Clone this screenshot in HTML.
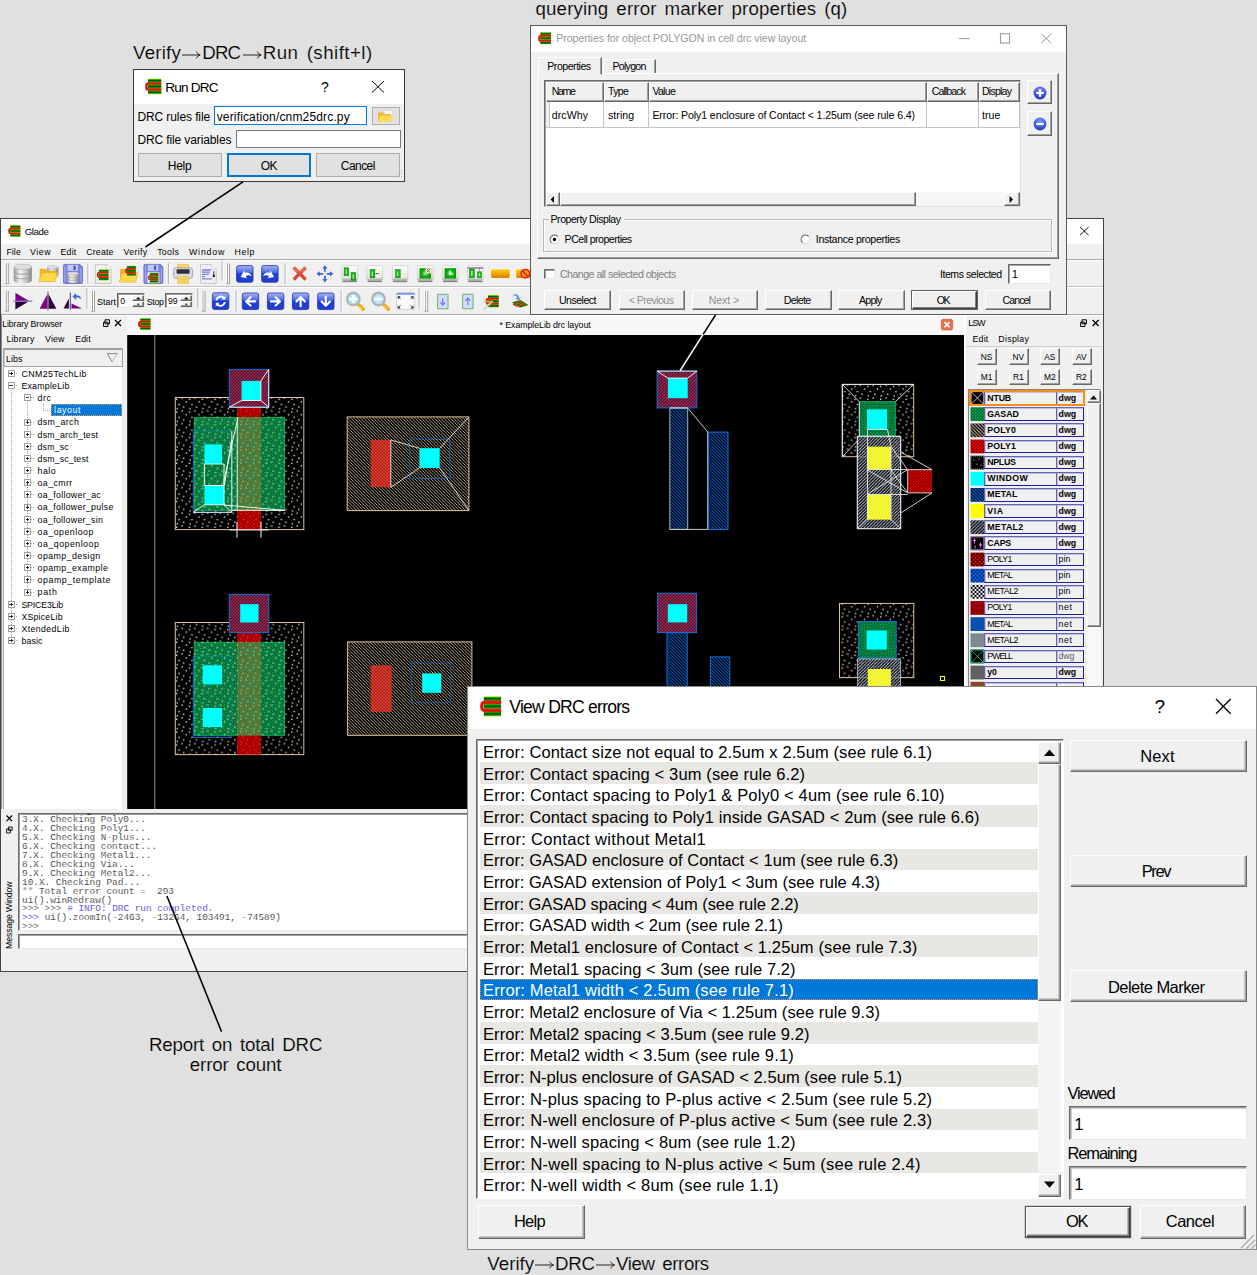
<!DOCTYPE html>
<html><head><meta charset="utf-8"><title>Glade DRC</title>
<style>
html,body{margin:0;padding:0}
body{width:1257px;height:1275px;background:#e0e0e0;position:relative;overflow:hidden;font-family:"Liberation Sans",sans-serif;font-size:8.8px;color:#000}
.t{position:absolute;white-space:nowrap;line-height:1;font-style:normal;font-weight:normal;color:#000;display:block}
.b{font-weight:bold}
.m{font-family:"Liberation Mono",monospace}
.x{position:absolute;box-sizing:border-box;display:block}
.w10{background:#e1e1e1;border:1px solid #adadad}
.rs{background:#f0f0f0;border:1px solid;border-color:#fff #696969 #696969 #fff;box-shadow:inset -1px -1px 0 #a0a0a0}
.sk{background:#fff;border:1px solid;border-color:#696969 #e8e8e8 #e8e8e8 #696969;box-shadow:inset 1px 1px 0 #a0a0a0}
svg{position:absolute;overflow:visible}
</style></head><body>
<svg width="0" height="0" style="left:0;top:0"><defs>
<symbol id="gl" viewBox="0 0 17 16">
<rect x="3" y="0.2" width="13.2" height="15.6" fill="#b8ec00"/>
<rect x="3" y="0.8" width="13.2" height="2.9" fill="#0c940c"/><rect x="3" y="6.3" width="13.2" height="3.4" fill="#0c940c"/><rect x="3" y="12.3" width="13.2" height="2.9" fill="#0c940c"/>
<rect x="3" y="1.5" width="13.2" height="1.3" fill="#065c06"/><rect x="3" y="7.3" width="13.2" height="1.4" fill="#065c06"/><rect x="3" y="13.1" width="13.2" height="1.3" fill="#065c06"/>
<path d="M16.4 4.9H3.4a2 2 0 0 0-2 2v2.2a2 2 0 0 0 2 2H16.4" fill="none" stroke="#dc1808" stroke-width="2.5"/>
</symbol>
</defs></svg>
<div class="x" style="left:0;top:218px;width:1104px;height:754px;background:#f0f0f0;border:1px solid #444"></div>
<div class="x" style="left:1px;top:219px;width:1102px;height:25px;background:#fff"></div>
<svg style="left:7.5px;top:225px" width="13" height="12"><use href="#gl"/></svg>
<i class="t" style="letter-spacing:-0.396px;left:24.7px;top:227.2px;font-size:9.7px">Glade</i>
<svg style="left:1079.5px;top:226.7px" width="9" height="9"><path d="M0 0L8.7 8.2M8.7 0L0 8.2" stroke="#000" stroke-width=".9" fill="none"/></svg>
<i class="t" style="letter-spacing:0.073px;left:6.4px;top:247.7px;font-size:8.8px">File</i>
<i class="t" style="letter-spacing:0.528px;left:30.0px;top:247.7px;font-size:8.8px">View</i>
<i class="t" style="letter-spacing:0.145px;left:60.6px;top:247.7px;font-size:8.8px">Edit</i>
<i class="t" style="letter-spacing:0.137px;left:86.3px;top:247.7px;font-size:8.8px">Create</i>
<i class="t" style="letter-spacing:0.318px;left:123.5px;top:247.7px;font-size:8.8px">Verify</i>
<i class="t" style="letter-spacing:0.289px;left:157.2px;top:247.7px;font-size:8.8px">Tools</i>
<i class="t" style="letter-spacing:0.820px;left:189.0px;top:247.7px;font-size:8.8px">Window</i>
<i class="t" style="letter-spacing:0.634px;left:234.5px;top:247.7px;font-size:8.8px">Help</i>
<div class="x" style="left:1px;top:259.0px;width:1102px;height:1px;background:#a8a8a8"></div>
<div class="x" style="left:1px;top:260.0px;width:1102px;height:1px;background:#fff"></div>
<div class="x" style="left:1px;top:286.0px;width:1102px;height:1px;background:#c4c4c4"></div>
<div class="x" style="left:1px;top:287.0px;width:1102px;height:1px;background:#fff"></div>
<div class="x" style="left:1px;top:313.5px;width:1102px;height:1px;background:#a8a8a8"></div>
<div class="x" style="left:1px;top:314.5px;width:1102px;height:1px;background:#fff"></div>
<div class="x" style="left:1px;top:315px;width:.8px;height:495px;background:#8a8a8a"></div>
<i class="t" style="letter-spacing:-0.116px;left:2.2px;top:319.6px;font-size:8.8px">Library Browser</i>
<svg style="left:102.5px;top:318.5px" width="20" height="9" viewBox="0 0 20 9"><path d="M2 .8h4.5v4H2zM.6 3.2h4.3v4.3H.6z" fill="#f0f0f0" stroke="#000" stroke-width="1"/><path d="M12 1l6 6M18 1l-6 6" stroke="#000" stroke-width="1.3"/></svg>
<i class="t" style="letter-spacing:0.183px;left:6.4px;top:334.8px;font-size:8.8px">Library</i>
<i class="t" style="letter-spacing:0.128px;left:45.1px;top:334.8px;font-size:8.8px">View</i>
<i class="t" style="letter-spacing:0.079px;left:75.2px;top:334.8px;font-size:8.8px">Edit</i>
<div class="x" style="left:2.5px;top:347.5px;width:120px;height:462px;background:#fff;border:1px solid #a0a0a0;border-right-color:#e8e8e8;border-bottom:none"></div>
<div class="x" style="left:3.5px;top:348.5px;width:119px;height:18.5px;background:#f0f0f0;border:1.5px solid #a0a0a0;border-top-color:#9a9a9a;border-left-color:#c8c8c8"></div>
<i class="t" style="letter-spacing:0.119px;left:6px;top:354.7px;font-size:8.8px">Libs</i>
<svg style="left:107px;top:353.4px" width="11" height="10"><path d="M.3 .6H10.3L5.2 9z" fill="none" stroke="#b4b4b4" stroke-width=".9"/><path d="M10.3 .6H.3L5.2 9" fill="none" stroke="#8c8c8c" stroke-width=".9"/></svg>
<i class="t" style="letter-spacing:0.449px;left:21.4px;top:369.9px;font-size:8.8px">CNM25TechLib</i>
<i class="t" style="letter-spacing:0.224px;left:21.4px;top:382.0px;font-size:8.8px">ExampleLib</i>
<i class="t" style="letter-spacing:0.487px;left:37.6px;top:394.1px;font-size:8.8px">drc</i>
<div class="x" style="left:51.3px;top:404.0px;width:71px;height:11.7px;background:#0078d7;border:1px dotted #e89858"></div>
<i class="t" style="letter-spacing:0.583px;left:54.1px;top:406.3px;font-size:8.8px;color:#fff">layout</i>
<i class="t" style="letter-spacing:0.366px;left:37.6px;top:418.4px;font-size:8.8px">dsm_arch</i>
<i class="t" style="letter-spacing:0.224px;left:37.6px;top:430.6px;font-size:8.8px">dsm_arch_test</i>
<i class="t" style="letter-spacing:0.136px;left:37.6px;top:442.7px;font-size:8.8px">dsm_sc</i>
<i class="t" style="letter-spacing:0.140px;left:37.6px;top:454.8px;font-size:8.8px">dsm_sc_test</i>
<i class="t" style="letter-spacing:0.487px;left:37.6px;top:467.0px;font-size:8.8px">halo</i>
<i class="t" style="letter-spacing:0.387px;left:37.6px;top:479.1px;font-size:8.8px">oa_cmrr</i>
<i class="t" style="letter-spacing:0.308px;left:37.6px;top:491.3px;font-size:8.8px">oa_follower_ac</i>
<i class="t" style="letter-spacing:0.304px;left:37.6px;top:503.4px;font-size:8.8px">oa_follower_pulse</i>
<i class="t" style="letter-spacing:0.296px;left:37.6px;top:515.5px;font-size:8.8px">oa_follower_sin</i>
<i class="t" style="letter-spacing:0.480px;left:37.6px;top:527.7px;font-size:8.8px">oa_openloop</i>
<i class="t" style="letter-spacing:0.492px;left:37.6px;top:539.8px;font-size:8.8px">oa_qopenloop</i>
<i class="t" style="letter-spacing:0.442px;left:37.6px;top:552.0px;font-size:8.8px">opamp_design</i>
<i class="t" style="letter-spacing:0.436px;left:37.6px;top:564.1px;font-size:8.8px">opamp_example</i>
<i class="t" style="letter-spacing:0.557px;left:37.6px;top:576.2px;font-size:8.8px">opamp_template</i>
<i class="t" style="letter-spacing:0.691px;left:37.6px;top:588.4px;font-size:8.8px">path</i>
<i class="t" style="letter-spacing:-0.168px;left:21.4px;top:600.5px;font-size:8.8px">SPICE3Lib</i>
<i class="t" style="letter-spacing:0.197px;left:21.4px;top:612.6px;font-size:8.8px">XSpiceLib</i>
<i class="t" style="letter-spacing:0.386px;left:21.4px;top:624.8px;font-size:8.8px">XtendedLib</i>
<i class="t" style="letter-spacing:0.139px;left:21.4px;top:636.9px;font-size:8.8px">basic</i>
<svg style="left:0;top:0" width="130" height="700" shape-rendering="crispEdges"><path d="M11 388.4V640.4" stroke="#a8a8a8" stroke-width="1" stroke-dasharray="1 1"/><path d="M27.5 400.6V591.8" stroke="#a8a8a8" stroke-width="1" stroke-dasharray="1 1"/><path d="M14.0 373.5H18.4" stroke="#a8a8a8" stroke-dasharray="1 1"/><rect x="8.0" y="370.5" width="6" height="6" fill="#fff" stroke="#8a8a8a" stroke-width=".8"/><path d="M9.3 373.5h3.4" stroke="#000" stroke-width=".8"/><path d="M11.0 371.8v3.4" stroke="#000" stroke-width=".8"/><path d="M14.0 385.6H18.4" stroke="#a8a8a8" stroke-dasharray="1 1"/><rect x="8.0" y="382.6" width="6" height="6" fill="#fff" stroke="#8a8a8a" stroke-width=".8"/><path d="M9.3 385.6h3.4" stroke="#000" stroke-width=".8"/><path d="M30.5 397.8H34.6" stroke="#a8a8a8" stroke-dasharray="1 1"/><rect x="24.5" y="394.8" width="6" height="6" fill="#fff" stroke="#8a8a8a" stroke-width=".8"/><path d="M25.8 397.8h3.4" stroke="#000" stroke-width=".8"/><path d="M43 403.9V410.4H51" stroke="#a8a8a8" fill="none" stroke-dasharray="1 1"/><path d="M30.5 422.1H34.6" stroke="#a8a8a8" stroke-dasharray="1 1"/><rect x="24.5" y="419.1" width="6" height="6" fill="#fff" stroke="#8a8a8a" stroke-width=".8"/><path d="M25.8 422.1h3.4" stroke="#000" stroke-width=".8"/><path d="M27.5 420.4v3.4" stroke="#000" stroke-width=".8"/><path d="M30.5 434.2H34.6" stroke="#a8a8a8" stroke-dasharray="1 1"/><rect x="24.5" y="431.2" width="6" height="6" fill="#fff" stroke="#8a8a8a" stroke-width=".8"/><path d="M25.8 434.2h3.4" stroke="#000" stroke-width=".8"/><path d="M27.5 432.5v3.4" stroke="#000" stroke-width=".8"/><path d="M30.5 446.3H34.6" stroke="#a8a8a8" stroke-dasharray="1 1"/><rect x="24.5" y="443.3" width="6" height="6" fill="#fff" stroke="#8a8a8a" stroke-width=".8"/><path d="M25.8 446.3h3.4" stroke="#000" stroke-width=".8"/><path d="M27.5 444.6v3.4" stroke="#000" stroke-width=".8"/><path d="M30.5 458.5H34.6" stroke="#a8a8a8" stroke-dasharray="1 1"/><rect x="24.5" y="455.5" width="6" height="6" fill="#fff" stroke="#8a8a8a" stroke-width=".8"/><path d="M25.8 458.5h3.4" stroke="#000" stroke-width=".8"/><path d="M27.5 456.8v3.4" stroke="#000" stroke-width=".8"/><path d="M30.5 470.6H34.6" stroke="#a8a8a8" stroke-dasharray="1 1"/><rect x="24.5" y="467.6" width="6" height="6" fill="#fff" stroke="#8a8a8a" stroke-width=".8"/><path d="M25.8 470.6h3.4" stroke="#000" stroke-width=".8"/><path d="M27.5 468.9v3.4" stroke="#000" stroke-width=".8"/><path d="M30.5 482.8H34.6" stroke="#a8a8a8" stroke-dasharray="1 1"/><rect x="24.5" y="479.8" width="6" height="6" fill="#fff" stroke="#8a8a8a" stroke-width=".8"/><path d="M25.8 482.8h3.4" stroke="#000" stroke-width=".8"/><path d="M27.5 481.1v3.4" stroke="#000" stroke-width=".8"/><path d="M30.5 494.9H34.6" stroke="#a8a8a8" stroke-dasharray="1 1"/><rect x="24.5" y="491.9" width="6" height="6" fill="#fff" stroke="#8a8a8a" stroke-width=".8"/><path d="M25.8 494.9h3.4" stroke="#000" stroke-width=".8"/><path d="M27.5 493.2v3.4" stroke="#000" stroke-width=".8"/><path d="M30.5 507.0H34.6" stroke="#a8a8a8" stroke-dasharray="1 1"/><rect x="24.5" y="504.0" width="6" height="6" fill="#fff" stroke="#8a8a8a" stroke-width=".8"/><path d="M25.8 507.0h3.4" stroke="#000" stroke-width=".8"/><path d="M27.5 505.3v3.4" stroke="#000" stroke-width=".8"/><path d="M30.5 519.2H34.6" stroke="#a8a8a8" stroke-dasharray="1 1"/><rect x="24.5" y="516.2" width="6" height="6" fill="#fff" stroke="#8a8a8a" stroke-width=".8"/><path d="M25.8 519.2h3.4" stroke="#000" stroke-width=".8"/><path d="M27.5 517.5v3.4" stroke="#000" stroke-width=".8"/><path d="M30.5 531.3H34.6" stroke="#a8a8a8" stroke-dasharray="1 1"/><rect x="24.5" y="528.3" width="6" height="6" fill="#fff" stroke="#8a8a8a" stroke-width=".8"/><path d="M25.8 531.3h3.4" stroke="#000" stroke-width=".8"/><path d="M27.5 529.6v3.4" stroke="#000" stroke-width=".8"/><path d="M30.5 543.5H34.6" stroke="#a8a8a8" stroke-dasharray="1 1"/><rect x="24.5" y="540.5" width="6" height="6" fill="#fff" stroke="#8a8a8a" stroke-width=".8"/><path d="M25.8 543.5h3.4" stroke="#000" stroke-width=".8"/><path d="M27.5 541.8v3.4" stroke="#000" stroke-width=".8"/><path d="M30.5 555.6H34.6" stroke="#a8a8a8" stroke-dasharray="1 1"/><rect x="24.5" y="552.6" width="6" height="6" fill="#fff" stroke="#8a8a8a" stroke-width=".8"/><path d="M25.8 555.6h3.4" stroke="#000" stroke-width=".8"/><path d="M27.5 553.9v3.4" stroke="#000" stroke-width=".8"/><path d="M30.5 567.7H34.6" stroke="#a8a8a8" stroke-dasharray="1 1"/><rect x="24.5" y="564.7" width="6" height="6" fill="#fff" stroke="#8a8a8a" stroke-width=".8"/><path d="M25.8 567.7h3.4" stroke="#000" stroke-width=".8"/><path d="M27.5 566.0v3.4" stroke="#000" stroke-width=".8"/><path d="M30.5 579.9H34.6" stroke="#a8a8a8" stroke-dasharray="1 1"/><rect x="24.5" y="576.9" width="6" height="6" fill="#fff" stroke="#8a8a8a" stroke-width=".8"/><path d="M25.8 579.9h3.4" stroke="#000" stroke-width=".8"/><path d="M27.5 578.2v3.4" stroke="#000" stroke-width=".8"/><path d="M30.5 592.0H34.6" stroke="#a8a8a8" stroke-dasharray="1 1"/><rect x="24.5" y="589.0" width="6" height="6" fill="#fff" stroke="#8a8a8a" stroke-width=".8"/><path d="M25.8 592.0h3.4" stroke="#000" stroke-width=".8"/><path d="M27.5 590.3v3.4" stroke="#000" stroke-width=".8"/><path d="M14.0 604.2H18.4" stroke="#a8a8a8" stroke-dasharray="1 1"/><rect x="8.0" y="601.2" width="6" height="6" fill="#fff" stroke="#8a8a8a" stroke-width=".8"/><path d="M9.3 604.2h3.4" stroke="#000" stroke-width=".8"/><path d="M11.0 602.5v3.4" stroke="#000" stroke-width=".8"/><path d="M14.0 616.3H18.4" stroke="#a8a8a8" stroke-dasharray="1 1"/><rect x="8.0" y="613.3" width="6" height="6" fill="#fff" stroke="#8a8a8a" stroke-width=".8"/><path d="M9.3 616.3h3.4" stroke="#000" stroke-width=".8"/><path d="M11.0 614.6v3.4" stroke="#000" stroke-width=".8"/><path d="M14.0 628.4H18.4" stroke="#a8a8a8" stroke-dasharray="1 1"/><rect x="8.0" y="625.4" width="6" height="6" fill="#fff" stroke="#8a8a8a" stroke-width=".8"/><path d="M9.3 628.4h3.4" stroke="#000" stroke-width=".8"/><path d="M11.0 626.7v3.4" stroke="#000" stroke-width=".8"/><path d="M14.0 640.6H18.4" stroke="#a8a8a8" stroke-dasharray="1 1"/><rect x="8.0" y="637.6" width="6" height="6" fill="#fff" stroke="#8a8a8a" stroke-width=".8"/><path d="M9.3 640.6h3.4" stroke="#000" stroke-width=".8"/><path d="M11.0 638.9v3.4" stroke="#000" stroke-width=".8"/></svg>
<svg style="left:0;top:0" width="1257" height="1275">
<defs>
<clipPath id="cv"><rect x="127.2" y="334.3" width="836.8" height="474.7"/></clipPath>
<pattern id="pNT" width="12.8" height="12.8" patternUnits="userSpaceOnUse" x="175" y="397"><g fill="#fff4dc"><rect x="1" y="1.6" width="1.3" height="1.3"/><rect x="6.4" y="0.4" width="1.3" height="1.3"/><rect x="10.6" y="4.2" width="1.3" height="1.3"/><rect x="3.4" y="6.8" width="1.3" height="1.3"/><rect x="8" y="9.4" width="1.3" height="1.3"/><rect x="1.6" y="11" width="1.3" height="1.3"/></g></pattern>
<pattern id="pGD" width="3.2" height="3.2" patternUnits="userSpaceOnUse"><rect width="3.2" height="3.2" fill="#066a34"/><rect x="0" y="0" width="1.05" height="1.05" fill="#00b860"/><rect x="1.6" y="1.6" width="1.05" height="1.05" fill="#00b860"/></pattern>
<pattern id="pP0" width="3.2" height="3.2" patternUnits="userSpaceOnUse"><rect width="3.2" height="3.2" fill="#000"/><path d="M-1 -1L4.2 4.2M-1 2.2L1 4.2M2.2 -1L4.2 1" stroke="#e0c8a4" stroke-width=".78"/></pattern>
<pattern id="pP1" width="3.2" height="3.2" patternUnits="userSpaceOnUse"><path d="M-1 4.2L4.2 -1M-1 1L1 -1M2.2 4.2L4.2 2.2" stroke="#ff0000" stroke-width="1.5"/></pattern>
<pattern id="pPG" width="3.2" height="3.2" patternUnits="userSpaceOnUse"><path d="M-1 4.2L4.2 -1M-1 1L1 -1M2.2 4.2L4.2 2.2" stroke="#a89040" stroke-width="1.1"/><rect x="0" y="0" width="1" height="1" fill="#ff2010"/></pattern>
<pattern id="pME" width="3.2" height="3.2" patternUnits="userSpaceOnUse"><path d="M-1 -1L4.2 4.2M-1 2.2L1 4.2M2.2 -1L4.2 1" stroke="#0868e0" stroke-width=".85"/></pattern>
<pattern id="pM2" width="3.2" height="3.2" patternUnits="userSpaceOnUse"><path d="M-1 4.2L4.2 -1M-1 1L1 -1M2.2 4.2L4.2 2.2" stroke="#c8d4e4" stroke-width=".9"/></pattern>
<pattern id="pPN" width="3.2" height="3.2" patternUnits="userSpaceOnUse"><rect width="3.2" height="3.2" fill="#000"/><path d="M-1 4.2L4.2 -1M-1 1L1 -1M2.2 4.2L4.2 2.2" stroke="#ff0000" stroke-width="1.45"/><path d="M-1 -1L4.2 4.2M-1 2.2L1 4.2M2.2 -1L4.2 1" stroke="#1068e0" stroke-width=".9" opacity=".75"/></pattern>
<pattern id="pRD" width="3.2" height="3.2" patternUnits="userSpaceOnUse"><rect width="3.2" height="3.2" fill="#402418"/><path d="M-1 4.2L4.2 -1M-1 1L1 -1M2.2 4.2L4.2 2.2" stroke="#ff2018" stroke-width="1.2"/><path d="M-1 -1L4.2 4.2M-1 2.2L1 4.2M2.2 -1L4.2 1" stroke="#ff4838" stroke-width=".85"/></pattern>
</defs>
<rect x="127.2" y="334.3" width="836.8" height="474.7" fill="#000"/>
<g clip-path="url(#cv)">
<path d="M154.8 334V809" stroke="#909090" stroke-width="1"/>
<rect x="175.3" y="397.5" width="128.5" height="132.1" fill="url(#pNT)" stroke="#dcc4a0" stroke-width="1"/>
<rect x="194.2" y="417.3" width="90.5" height="93" fill="url(#pGD)" stroke="#10c060" stroke-width=".8"/>
<rect x="194.2" y="417.3" width="90.5" height="93" fill="url(#pNT)" opacity=".8"/>
<rect x="237" y="407.2" width="24" height="10.1" fill="url(#pP1)"/>
<rect x="237" y="510.3" width="24" height="19.3" fill="url(#pP1)"/>
<rect x="237" y="407.2" width="24" height="10.1" fill="#c00000" opacity=".4"/>
<rect x="237" y="510.3" width="24" height="19.3" fill="#c00000" opacity=".4"/>
<rect x="237" y="417.3" width="24" height="93" fill="url(#pPG)" opacity=".7"/>
<path d="M193.3 431.1V512.3H231.8" fill="none" stroke="#1070e0" stroke-width="1"/>
<path d="M193.3 431.1H231.8V512.3" fill="none" stroke="#1088c0" stroke-width="1" stroke-dasharray="2 1" opacity=".8"/>
<rect x="204.4" y="444.4" width="17.6" height="19.6" fill="#00ffff"/><rect x="204.4" y="485.5" width="19.6" height="19.3" fill="#00ffff"/>
<rect x="229.3" y="369.4" width="39.5" height="38" fill="url(#pPN)" stroke="#1070e0" stroke-width="1"/>
<rect x="241.6" y="380.9" width="19.3" height="19.6" fill="#00ffff"/>
<rect x="175.3" y="622.5" width="128.5" height="132.1" fill="url(#pNT)" stroke="#dcc4a0" stroke-width="1"/>
<rect x="194.2" y="642.3" width="90.5" height="93" fill="url(#pGD)" stroke="#10c060" stroke-width=".8"/>
<rect x="194.2" y="642.3" width="90.5" height="93" fill="url(#pNT)" opacity=".8"/>
<rect x="237" y="632.2" width="24" height="10.1" fill="url(#pP1)"/>
<rect x="237" y="735.3" width="24" height="19.3" fill="url(#pP1)"/>
<rect x="237" y="632.2" width="24" height="10.1" fill="#c00000" opacity=".4"/>
<rect x="237" y="735.3" width="24" height="19.3" fill="#c00000" opacity=".4"/>
<rect x="237" y="642.3" width="24" height="93" fill="url(#pPG)" opacity=".7"/>
<path d="M193.3 656.1V737.3H231.8" fill="none" stroke="#1070e0" stroke-width="1"/>
<path d="M193.3 656.1H231.8V737.3" fill="none" stroke="#1088c0" stroke-width="1" stroke-dasharray="2 1" opacity=".8"/>
<rect x="202.8" y="665.3" width="19.3" height="19.1" fill="#00ffff"/><rect x="202.8" y="708" width="19.3" height="19.1" fill="#00ffff"/>
<rect x="229.3" y="594.4" width="39.5" height="38" fill="url(#pPN)" stroke="#1070e0" stroke-width="1"/>
<rect x="240.2" y="604.2" width="18.3" height="18.3" fill="#00ffff"/>
<g stroke="#fff" stroke-width="1" fill="none">
<path d="M268.7 369.4V407.2H229.3M268.7 369.4L260.9 380.9M229.3 407.2L241.6 400.5H260.9L268.7 407.2M260.9 380.9V400.5" opacity=".9"/>
<path d="M231.8 431V512.3H193.3L204.4 504.8H224L231.8 512.3M237.2 417.3V510.3M238 417.5L224 480V505L284.7 510.3H231.8M231.5 440L224.5 485M204.4 464H224V485.5H204.4Z" opacity=".9"/>
<path d="M229.3 529.9H268.7M237 522V537.7M261 522V537.7"/>
</g>
<rect x="347.2" y="416.9" width="121.7" height="93.7" fill="url(#pP0)" stroke="#dcc4a0" stroke-width="1"/>
<rect x="370.8" y="439.8" width="20" height="47.5" fill="url(#pRD)"/>
<rect x="409.9" y="439.2" width="39.9" height="39.2" fill="none" stroke="#1070e0" stroke-width="1" stroke-dasharray="2 1"/>
<rect x="419.4" y="448.2" width="20.3" height="19.8" fill="#00ffff"/>
<path d="M390.8 440L419.4 448.2M390.8 487.3L419.4 468M439.7 448.2L468.5 417.5M439.7 468L468.5 510M390.8 440V487.3" stroke="#f0f0f0" stroke-width="1" fill="none" opacity=".85"/>
<rect x="347.6" y="641.9" width="124.3" height="93.4" fill="url(#pP0)" stroke="#dcc4a0" stroke-width="1"/>
<rect x="370.8" y="665.3" width="20.9" height="46.6" fill="url(#pRD)"/>
<rect x="411.3" y="663.2" width="39.7" height="39.5" fill="none" stroke="#1070e0" stroke-width=".9" stroke-dasharray="1.6 .8"/>
<rect x="422.2" y="673.4" width="19.1" height="19.4" fill="#00ffff"/>
<rect x="669.8" y="408" width="17.9" height="121.4" fill="url(#pME)" stroke="#b0b0b0" stroke-width="1"/>
<rect x="707.8" y="432.1" width="20.2" height="97.3" fill="url(#pME)" stroke="#1070e0" stroke-width="1"/>
<path d="M687.7 408L707.8 432.1V529.4H669.8" stroke="#c8c8c8" stroke-width="1" fill="none"/>
<rect x="657.1" y="371.1" width="39.8" height="36.8" fill="url(#pPN)" stroke="#1070e0" stroke-width="1"/>
<rect x="667.9" y="378.1" width="19.8" height="20.1" fill="#00ffff"/>
<path d="M657.1 371.1H696.9M657.1 371.1L667.9 378.1H687.7L696.9 371.1M669.8 407.9H687.7" stroke="#fff" stroke-width="1" fill="none" opacity=".9"/>
<rect x="667" y="632.6" width="20.2" height="80" fill="url(#pME)" stroke="#1070e0" stroke-width="1"/>
<rect x="710.4" y="656.9" width="19.4" height="60" fill="url(#pME)" stroke="#1070e0" stroke-width="1"/>
<rect x="657.6" y="593.2" width="39" height="39.4" fill="url(#pPN)" stroke="#1070e0" stroke-width="1"/>
<rect x="667.8" y="604.2" width="19.4" height="18.2" fill="#00ffff"/>
<rect x="842.3" y="384.4" width="71.4" height="72.3" fill="url(#pNT)" stroke="#dcc4a0" stroke-width="1"/>
<rect x="859.3" y="401.7" width="36" height="34.3" fill="url(#pGD)" stroke="#10c060" stroke-width=".8"/>
<rect x="866.9" y="409.3" width="20.1" height="20" fill="#00ffff"/>
<rect x="857.3" y="436.3" width="43.4" height="92.4" fill="#000" opacity=".6"/>
<rect x="857.3" y="436.3" width="43.4" height="92.4" fill="url(#pM2)" stroke="#c8d8f0" stroke-width=".9" stroke-opacity=".8"/>
<rect x="867" y="446.7" width="24" height="22.6" fill="#ffff00"/><rect x="867" y="494.7" width="24" height="24.9" fill="#ffff00"/>
<rect x="867" y="446.7" width="24" height="22.6" fill="url(#pM2)" opacity=".6"/><rect x="867" y="494.7" width="24" height="24.9" fill="url(#pM2)" opacity=".6"/>
<rect x="907.7" y="469.7" width="24.3" height="23.2" fill="url(#pP1)"/><rect x="907.7" y="469.7" width="24.3" height="23.2" fill="#c00000" opacity=".4"/>
<g stroke="#f0f0f0" stroke-width="1" fill="none" opacity=".85">
<path d="M842.3 384.4H913.7M842.3 384.4V456.7M842.3 384.4L859.3 401.7M913.7 384.4L895.3 401.7M842.3 456.7L857.3 441M859.3 401.7V436M867.5 429.5H887.5L891 446.7M867.5 429.5V520M891 446.7V520"/>
<path d="M900.7 452L932 469.7H907.7V492.9H932L900.7 513M867 469.5H907.7M867 494.5H907.7M867.5 470L907.7 492.9M867.5 494L907.7 469.7M891 446.7L907.7 469.7M891 470L907.7 492.9M857.3 528.7L867 519.6M900.7 528.7L891 519.6M857.3 436.3H900.7V528.7H857.3Z"/>
</g>
<rect x="839.5" y="603.4" width="74.3" height="74.2" fill="url(#pNT)" stroke="#dcc4a0" stroke-width="1"/>
<rect x="858.4" y="621.6" width="37.8" height="36.5" fill="url(#pGD)" stroke="#1070e0" stroke-width="1"/>
<rect x="866.6" y="630.5" width="20.2" height="19.1" fill="#00ffff"/>
<rect x="857.6" y="658.9" width="43" height="60" fill="#000" opacity=".6"/>
<rect x="857.6" y="658.9" width="43" height="60" fill="url(#pM2)" stroke="#c8d8f0" stroke-width=".9" stroke-opacity=".8"/>
<rect x="867.8" y="669" width="23.1" height="30" fill="#ffff00"/><rect x="867.8" y="669" width="23.1" height="30" fill="url(#pM2)" opacity=".6"/>
<rect x="940.5" y="676.5" width="4" height="4" fill="none" stroke="#ffff00" stroke-width="1"/>
</g></svg>
<div class="x" style="left:964px;top:315px;width:1.5px;height:495px;background:#fff"></div>
<i class="t" style="letter-spacing:-0.885px;left:968.2px;top:319.3px;font-size:8.8px">LSW</i>
<svg style="left:1080.4px;top:318.7px" width="20" height="9" viewBox="0 0 20 9"><path d="M2 .8h4.5v4H2zM.6 3.2h4.3v4.3H.6z" fill="#f0f0f0" stroke="#000" stroke-width="1"/><path d="M12.6 1l6 6M18.6 1l-6 6" stroke="#000" stroke-width="1.3"/></svg>
<i class="t" style="letter-spacing:0.212px;left:972.5px;top:335.3px;font-size:8.8px">Edit</i>
<i class="t" style="letter-spacing:0.291px;left:998.3px;top:335.3px;font-size:8.8px">Display</i>
<div class="x" style="left:966px;top:346.3px;width:136px;height:1px;background:#d0d0d0"></div>
<div class="x rs" style="left:977.3px;top:348.2px;width:19.5px;height:16.8px"></div>
<i class="t" style="left:977.3px;top:352.8px;width:18.5px;text-align:center;font-size:8.4px">NS</i>
<div class="x rs" style="left:1009.0px;top:348.2px;width:19.6px;height:16.8px"></div>
<i class="t" style="left:1009.0px;top:352.8px;width:18.6px;text-align:center;font-size:8.4px">NV</i>
<div class="x rs" style="left:1040.3px;top:348.2px;width:20.0px;height:16.8px"></div>
<i class="t" style="left:1040.3px;top:352.8px;width:19.0px;text-align:center;font-size:8.4px">AS</i>
<div class="x rs" style="left:1072.0px;top:348.2px;width:19.8px;height:16.8px"></div>
<i class="t" style="left:1072.0px;top:352.8px;width:18.8px;text-align:center;font-size:8.4px">AV</i>
<div class="x rs" style="left:977.3px;top:368.5px;width:19.5px;height:16.5px"></div>
<i class="t" style="left:977.3px;top:372.8px;width:18.5px;text-align:center;font-size:8.4px">M1</i>
<div class="x rs" style="left:1009.0px;top:368.5px;width:19.6px;height:16.5px"></div>
<i class="t" style="left:1009.0px;top:372.8px;width:18.6px;text-align:center;font-size:8.4px">R1</i>
<div class="x rs" style="left:1040.3px;top:368.5px;width:20.0px;height:16.5px"></div>
<i class="t" style="left:1040.3px;top:372.8px;width:19.0px;text-align:center;font-size:8.4px">M2</i>
<div class="x rs" style="left:1072.0px;top:368.5px;width:19.8px;height:16.5px"></div>
<i class="t" style="left:1072.0px;top:372.8px;width:18.8px;text-align:center;font-size:8.4px">R2</i>
<div class="x" style="left:968px;top:388.5px;width:133px;height:300px;background:#f0f0f0;border:1px solid;border-color:#828282 #fff #fff #828282"></div>
<svg style="left:0;top:0" width="1257" height="700"><defs>
<pattern id="s3" width="3.4" height="3.4" patternUnits="userSpaceOnUse"><rect width="3.4" height="3.4" fill="#000"/><path d="M-1 -1L4.4 4.4M-1 2.4L1 4.4M2.4 -1L4.4 1" stroke="#e0c8a4" stroke-width="1"/></pattern>
<pattern id="s4" width="3.4" height="3.4" patternUnits="userSpaceOnUse"><rect width="3.4" height="3.4" fill="#000"/><path d="M-1 4.4L4.4 -1M-1 1L1 -1M2.4 4.4L4.4 2.4" stroke="#ff0000" stroke-width="1.7"/></pattern>
<pattern id="s7" width="3.4" height="3.4" patternUnits="userSpaceOnUse"><rect width="3.4" height="3.4" fill="#000818"/><path d="M-1 -1L4.4 4.4M-1 2.4L1 4.4M2.4 -1L4.4 1" stroke="#0868e0" stroke-width="1.1"/></pattern>
<pattern id="s9" width="3.4" height="3.4" patternUnits="userSpaceOnUse"><rect width="3.4" height="3.4" fill="#000"/><path d="M-1 4.4L4.4 -1M-1 1L1 -1M2.4 4.4L4.4 2.4" stroke="#b8c4d8" stroke-width="1"/></pattern>
<pattern id="s11" width="4" height="4" patternUnits="userSpaceOnUse"><rect width="4" height="4" fill="#000"/><rect width="2" height="2" fill="#f00"/><rect x="2" y="2" width="2" height="2" fill="#f00"/></pattern>
<pattern id="s12" width="4" height="4" patternUnits="userSpaceOnUse"><rect width="4" height="4" fill="#002060"/><rect width="2" height="2" fill="#1070ff"/><rect x="2" y="2" width="2" height="2" fill="#1070ff"/></pattern>
<pattern id="s13" width="4" height="4" patternUnits="userSpaceOnUse"><rect width="4" height="4" fill="#000"/><rect width="2" height="2" fill="#f4f4ff"/><rect x="2" y="2" width="2" height="2" fill="#f4f4ff"/></pattern>
<pattern id="sg" width="3.2" height="3.2" patternUnits="userSpaceOnUse"><rect width="3.2" height="3.2" fill="#066a30"/><rect width="1.2" height="1.2" fill="#00c060"/><rect x="1.6" y="1.6" width="1.2" height="1.2" fill="#00c060"/></pattern>
</defs>
<g transform="translate(970.5 391.10)"><rect width="13.8" height="13.8" fill="#000"/><rect x=".5" y=".5" width="12.8" height="12.8" fill="none" stroke="#e0c8a4" stroke-width="1"/><path d="M.5 .5L13.3 13.3M13.3 .5L.5 13.3" stroke="#e8e8e8" stroke-width=".8"/></g>
<g transform="translate(970.5 407.25)"><rect width="13.8" height="13.8" fill="url(#sg)"/></g>
<g transform="translate(970.5 423.40)"><rect width="13.8" height="13.8" fill="url(#s3)"/></g>
<g transform="translate(970.5 439.55)"><rect width="13.8" height="13.8" fill="url(#s4)"/></g>
<g transform="translate(970.5 455.70)"><rect width="13.8" height="13.8" fill="#000"/><rect x=".4" y=".4" width="13" height="13" fill="none" stroke="#e0c8a4" stroke-width=".8" stroke-dasharray="1 1"/><g fill="#e0c8a4"><rect x="3" y="4" width="1" height="1"/><rect x="8" y="3" width="1" height="1"/><rect x="6" y="8" width="1" height="1"/><rect x="10" y="9" width="1" height="1"/></g></g>
<g transform="translate(970.5 471.85)"><rect width="13.8" height="13.8" fill="#00ffff"/></g>
<g transform="translate(970.5 488.00)"><rect width="13.8" height="13.8" fill="url(#s7)"/></g>
<g transform="translate(970.5 504.15)"><rect width="13.8" height="13.8" fill="#ffff00"/></g>
<g transform="translate(970.5 520.30)"><rect width="13.8" height="13.8" fill="url(#s9)"/></g>
<g transform="translate(970.5 536.45)"><rect width="13.8" height="13.8" fill="#000"/><rect x=".5" y=".5" width="12.8" height="12.8" fill="none" stroke="#d080d0" stroke-width=".8"/><path d="M4 2v5M2.5 4h3M10 6v5M8.5 8.5h3M4.5 9v3" stroke="#ff90ff" stroke-width=".9"/></g>
<g transform="translate(970.5 552.60)"><rect width="13.8" height="13.8" fill="url(#s11)"/></g>
<g transform="translate(970.5 568.75)"><rect width="13.8" height="13.8" fill="url(#s12)"/></g>
<g transform="translate(970.5 584.90)"><rect width="13.8" height="13.8" fill="url(#s13)"/></g>
<g transform="translate(970.5 601.05)"><rect width="13.8" height="13.8" fill="#98000c"/></g>
<g transform="translate(970.5 617.20)"><rect width="13.8" height="13.8" fill="#0a50b0"/></g>
<g transform="translate(970.5 633.35)"><rect width="13.8" height="13.8" fill="#808890"/></g>
<g transform="translate(970.5 649.50)"><rect width="13.8" height="13.8" fill="#000"/><rect x=".5" y=".5" width="12.8" height="12.8" fill="none" stroke="#20c080" stroke-width="1"/><path d="M.5 .5L13.3 13.3M13.3 .5L.5 13.3" stroke="#20c080" stroke-width=".8"/></g>
<g transform="translate(970.5 665.65)"><rect width="13.8" height="13.8" fill="#606060"/></g>
<g transform="translate(970.5 681.80)"><rect width="13.8" height="13.8" fill="#8a4a28"/></g>
</svg>
<div class="x" style="left:984.3px;top:391.10px;width:73px;height:13.8px;background:#f0f0f0;border:1px solid;border-color:#6464b8 #1c1c98 #1c1c98 #6464b8;box-shadow:inset 1px 1px 0 #c0c0e0"></div>
<div class="x" style="left:1056.3px;top:391.10px;width:27.4px;height:13.8px;background:#f0f0f0;border:1px solid;border-color:#6464b8 #1c1c98 #1c1c98 #6464b8;box-shadow:inset 1px 1px 0 #c0c0e0"></div>
<i class="t b" style="letter-spacing:-0.180px;left:987.3px;top:393.50px;font-size:8.8px">NTUB</i>
<i class="t b" style="letter-spacing:0.052px;left:1058.5px;top:393.50px;font-size:8.8px">dwg</i>
<div class="x" style="left:984.3px;top:407.25px;width:73px;height:13.8px;background:#f0f0f0;border:1px solid;border-color:#6464b8 #1c1c98 #1c1c98 #6464b8;box-shadow:inset 1px 1px 0 #c0c0e0"></div>
<div class="x" style="left:1056.3px;top:407.25px;width:27.4px;height:13.8px;background:#f0f0f0;border:1px solid;border-color:#6464b8 #1c1c98 #1c1c98 #6464b8;box-shadow:inset 1px 1px 0 #c0c0e0"></div>
<i class="t b" style="letter-spacing:-0.070px;left:987.3px;top:409.65px;font-size:8.8px">GASAD</i>
<i class="t b" style="letter-spacing:0.052px;left:1058.5px;top:409.65px;font-size:8.8px">dwg</i>
<div class="x" style="left:984.3px;top:423.40px;width:73px;height:13.8px;background:#f0f0f0;border:1px solid;border-color:#6464b8 #1c1c98 #1c1c98 #6464b8;box-shadow:inset 1px 1px 0 #c0c0e0"></div>
<div class="x" style="left:1056.3px;top:423.40px;width:27.4px;height:13.8px;background:#f0f0f0;border:1px solid;border-color:#6464b8 #1c1c98 #1c1c98 #6464b8;box-shadow:inset 1px 1px 0 #c0c0e0"></div>
<i class="t b" style="letter-spacing:0.113px;left:987.3px;top:425.80px;font-size:8.8px">POLY0</i>
<i class="t b" style="letter-spacing:0.052px;left:1058.5px;top:425.80px;font-size:8.8px">dwg</i>
<div class="x" style="left:984.3px;top:439.55px;width:73px;height:13.8px;background:#f0f0f0;border:1px solid;border-color:#6464b8 #1c1c98 #1c1c98 #6464b8;box-shadow:inset 1px 1px 0 #c0c0e0"></div>
<div class="x" style="left:1056.3px;top:439.55px;width:27.4px;height:13.8px;background:#f0f0f0;border:1px solid;border-color:#6464b8 #1c1c98 #1c1c98 #6464b8;box-shadow:inset 1px 1px 0 #c0c0e0"></div>
<i class="t b" style="letter-spacing:0.113px;left:987.3px;top:441.95px;font-size:8.8px">POLY1</i>
<i class="t b" style="letter-spacing:0.052px;left:1058.5px;top:441.95px;font-size:8.8px">dwg</i>
<div class="x" style="left:984.3px;top:455.70px;width:73px;height:13.8px;background:#f0f0f0;border:1px solid;border-color:#6464b8 #1c1c98 #1c1c98 #6464b8;box-shadow:inset 1px 1px 0 #c0c0e0"></div>
<div class="x" style="left:1056.3px;top:455.70px;width:27.4px;height:13.8px;background:#f0f0f0;border:1px solid;border-color:#6464b8 #1c1c98 #1c1c98 #6464b8;box-shadow:inset 1px 1px 0 #c0c0e0"></div>
<i class="t b" style="letter-spacing:-0.331px;left:987.3px;top:458.10px;font-size:8.8px">NPLUS</i>
<i class="t b" style="letter-spacing:0.052px;left:1058.5px;top:458.10px;font-size:8.8px">dwg</i>
<div class="x" style="left:984.3px;top:471.85px;width:73px;height:13.8px;background:#f0f0f0;border:1px solid;border-color:#6464b8 #1c1c98 #1c1c98 #6464b8;box-shadow:inset 1px 1px 0 #c0c0e0"></div>
<div class="x" style="left:1056.3px;top:471.85px;width:27.4px;height:13.8px;background:#f0f0f0;border:1px solid;border-color:#6464b8 #1c1c98 #1c1c98 #6464b8;box-shadow:inset 1px 1px 0 #c0c0e0"></div>
<i class="t b" style="letter-spacing:0.358px;left:987.3px;top:474.25px;font-size:8.8px">WINDOW</i>
<i class="t b" style="letter-spacing:0.052px;left:1058.5px;top:474.25px;font-size:8.8px">dwg</i>
<div class="x" style="left:984.3px;top:488.00px;width:73px;height:13.8px;background:#f0f0f0;border:1px solid;border-color:#6464b8 #1c1c98 #1c1c98 #6464b8;box-shadow:inset 1px 1px 0 #c0c0e0"></div>
<div class="x" style="left:1056.3px;top:488.00px;width:27.4px;height:13.8px;background:#f0f0f0;border:1px solid;border-color:#6464b8 #1c1c98 #1c1c98 #6464b8;box-shadow:inset 1px 1px 0 #c0c0e0"></div>
<i class="t b" style="letter-spacing:0.087px;left:987.3px;top:490.40px;font-size:8.8px">METAL</i>
<i class="t b" style="letter-spacing:0.052px;left:1058.5px;top:490.40px;font-size:8.8px">dwg</i>
<div class="x" style="left:984.3px;top:504.15px;width:73px;height:13.8px;background:#f0f0f0;border:1px solid;border-color:#6464b8 #1c1c98 #1c1c98 #6464b8;box-shadow:inset 1px 1px 0 #c0c0e0"></div>
<div class="x" style="left:1056.3px;top:504.15px;width:27.4px;height:13.8px;background:#f0f0f0;border:1px solid;border-color:#6464b8 #1c1c98 #1c1c98 #6464b8;box-shadow:inset 1px 1px 0 #c0c0e0"></div>
<i class="t b" style="letter-spacing:0.615px;left:987.3px;top:506.55px;font-size:8.8px">VIA</i>
<i class="t b" style="letter-spacing:0.052px;left:1058.5px;top:506.55px;font-size:8.8px">dwg</i>
<div class="x" style="left:984.3px;top:520.30px;width:73px;height:13.8px;background:#f0f0f0;border:1px solid;border-color:#6464b8 #1c1c98 #1c1c98 #6464b8;box-shadow:inset 1px 1px 0 #c0c0e0"></div>
<div class="x" style="left:1056.3px;top:520.30px;width:27.4px;height:13.8px;background:#f0f0f0;border:1px solid;border-color:#6464b8 #1c1c98 #1c1c98 #6464b8;box-shadow:inset 1px 1px 0 #c0c0e0"></div>
<i class="t b" style="letter-spacing:0.250px;left:987.3px;top:522.70px;font-size:8.8px">METAL2</i>
<i class="t b" style="letter-spacing:0.052px;left:1058.5px;top:522.70px;font-size:8.8px">dwg</i>
<div class="x" style="left:984.3px;top:536.45px;width:73px;height:13.8px;background:#f0f0f0;border:1px solid;border-color:#6464b8 #1c1c98 #1c1c98 #6464b8;box-shadow:inset 1px 1px 0 #c0c0e0"></div>
<div class="x" style="left:1056.3px;top:536.45px;width:27.4px;height:13.8px;background:#f0f0f0;border:1px solid;border-color:#6464b8 #1c1c98 #1c1c98 #6464b8;box-shadow:inset 1px 1px 0 #c0c0e0"></div>
<i class="t b" style="letter-spacing:-0.183px;left:987.3px;top:538.85px;font-size:8.8px">CAPS</i>
<i class="t b" style="letter-spacing:0.052px;left:1058.5px;top:538.85px;font-size:8.8px">dwg</i>
<div class="x" style="left:984.3px;top:552.60px;width:73px;height:13.8px;background:#f0f0f0;border:1px solid;border-color:#6464b8 #1c1c98 #1c1c98 #6464b8;box-shadow:inset 1px 1px 0 #c0c0e0"></div>
<div class="x" style="left:1056.3px;top:552.60px;width:27.4px;height:13.8px;background:#f0f0f0;border:1px solid;border-color:#6464b8 #1c1c98 #1c1c98 #6464b8;box-shadow:inset 1px 1px 0 #c0c0e0"></div>
<i class="t" style="letter-spacing:-0.655px;left:987.3px;top:555.00px;font-size:8.8px">POLY1</i>
<i class="t" style="letter-spacing:0.078px;left:1058.5px;top:555.00px;font-size:8.8px">pin</i>
<div class="x" style="left:984.3px;top:568.75px;width:73px;height:13.8px;background:#f0f0f0;border:1px solid;border-color:#6464b8 #1c1c98 #1c1c98 #6464b8;box-shadow:inset 1px 1px 0 #c0c0e0"></div>
<div class="x" style="left:1056.3px;top:568.75px;width:27.4px;height:13.8px;background:#f0f0f0;border:1px solid;border-color:#6464b8 #1c1c98 #1c1c98 #6464b8;box-shadow:inset 1px 1px 0 #c0c0e0"></div>
<i class="t" style="letter-spacing:-0.747px;left:987.3px;top:571.15px;font-size:8.8px">METAL</i>
<i class="t" style="letter-spacing:0.078px;left:1058.5px;top:571.15px;font-size:8.8px">pin</i>
<div class="x" style="left:984.3px;top:584.90px;width:73px;height:13.8px;background:#f0f0f0;border:1px solid;border-color:#6464b8 #1c1c98 #1c1c98 #6464b8;box-shadow:inset 1px 1px 0 #c0c0e0"></div>
<div class="x" style="left:1056.3px;top:584.90px;width:27.4px;height:13.8px;background:#f0f0f0;border:1px solid;border-color:#6464b8 #1c1c98 #1c1c98 #6464b8;box-shadow:inset 1px 1px 0 #c0c0e0"></div>
<i class="t" style="letter-spacing:-0.476px;left:987.3px;top:587.30px;font-size:8.8px">METAL2</i>
<i class="t" style="letter-spacing:0.078px;left:1058.5px;top:587.30px;font-size:8.8px">pin</i>
<div class="x" style="left:984.3px;top:601.05px;width:73px;height:13.8px;background:#f0f0f0;border:1px solid;border-color:#6464b8 #1c1c98 #1c1c98 #6464b8;box-shadow:inset 1px 1px 0 #c0c0e0"></div>
<div class="x" style="left:1056.3px;top:601.05px;width:27.4px;height:13.8px;background:#f0f0f0;border:1px solid;border-color:#6464b8 #1c1c98 #1c1c98 #6464b8;box-shadow:inset 1px 1px 0 #c0c0e0"></div>
<i class="t" style="letter-spacing:-0.655px;left:987.3px;top:603.45px;font-size:8.8px">POLY1</i>
<i class="t" style="letter-spacing:0.633px;left:1058.5px;top:603.45px;font-size:8.8px">net</i>
<div class="x" style="left:984.3px;top:617.20px;width:73px;height:13.8px;background:#f0f0f0;border:1px solid;border-color:#6464b8 #1c1c98 #1c1c98 #6464b8;box-shadow:inset 1px 1px 0 #c0c0e0"></div>
<div class="x" style="left:1056.3px;top:617.20px;width:27.4px;height:13.8px;background:#f0f0f0;border:1px solid;border-color:#6464b8 #1c1c98 #1c1c98 #6464b8;box-shadow:inset 1px 1px 0 #c0c0e0"></div>
<i class="t" style="letter-spacing:-0.747px;left:987.3px;top:619.60px;font-size:8.8px">METAL</i>
<i class="t" style="letter-spacing:0.633px;left:1058.5px;top:619.60px;font-size:8.8px">net</i>
<div class="x" style="left:984.3px;top:633.35px;width:73px;height:13.8px;background:#f0f0f0;border:1px solid;border-color:#6464b8 #1c1c98 #1c1c98 #6464b8;box-shadow:inset 1px 1px 0 #c0c0e0"></div>
<div class="x" style="left:1056.3px;top:633.35px;width:27.4px;height:13.8px;background:#f0f0f0;border:1px solid;border-color:#6464b8 #1c1c98 #1c1c98 #6464b8;box-shadow:inset 1px 1px 0 #c0c0e0"></div>
<i class="t" style="letter-spacing:-0.476px;left:987.3px;top:635.75px;font-size:8.8px">METAL2</i>
<i class="t" style="letter-spacing:0.633px;left:1058.5px;top:635.75px;font-size:8.8px">net</i>
<div class="x" style="left:984.3px;top:649.50px;width:73px;height:13.8px;background:#f0f0f0;border:1px solid;border-color:#6464b8 #1c1c98 #1c1c98 #6464b8;box-shadow:inset 1px 1px 0 #c0c0e0"></div>
<div class="x" style="left:1056.3px;top:649.50px;width:27.4px;height:13.8px;background:#f0f0f0;border:1px solid;border-color:#6464b8 #1c1c98 #1c1c98 #6464b8;box-shadow:inset 1px 1px 0 #c0c0e0"></div>
<i class="t" style="letter-spacing:-1.034px;left:987.3px;top:651.90px;font-size:8.8px">PWELL</i>
<i class="t" style="letter-spacing:-0.122px;left:1058.5px;top:651.90px;font-size:8.8px;color:#5c5c5c">dwg</i>
<div class="x" style="left:984.3px;top:665.65px;width:73px;height:13.8px;background:#f0f0f0;border:1px solid;border-color:#6464b8 #1c1c98 #1c1c98 #6464b8;box-shadow:inset 1px 1px 0 #c0c0e0"></div>
<div class="x" style="left:1056.3px;top:665.65px;width:27.4px;height:13.8px;background:#f0f0f0;border:1px solid;border-color:#6464b8 #1c1c98 #1c1c98 #6464b8;box-shadow:inset 1px 1px 0 #c0c0e0"></div>
<i class="t b" style="letter-spacing:-0.189px;left:987.3px;top:668.05px;font-size:8.8px">y0</i>
<i class="t b" style="letter-spacing:0.052px;left:1058.5px;top:668.05px;font-size:8.8px">dwg</i>
<div class="x" style="left:984.3px;top:681.80px;width:73px;height:13.8px;background:#f0f0f0;border:1px solid;border-color:#6464b8 #1c1c98 #1c1c98 #6464b8;box-shadow:inset 1px 1px 0 #c0c0e0"></div>
<div class="x" style="left:1056.3px;top:681.80px;width:27.4px;height:13.8px;background:#f0f0f0;border:1px solid;border-color:#6464b8 #1c1c98 #1c1c98 #6464b8;box-shadow:inset 1px 1px 0 #c0c0e0"></div>
<div class="x" style="left:969px;top:389.8px;width:116px;height:16.4px;border:2px solid #ff8c1a"></div>
<div class="x" style="left:1086.8px;top:390px;width:13.8px;height:296px;background:#f8f8f8"></div>
<div class="x rs" style="left:1086.8px;top:390.2px;width:13.8px;height:13.2px"></div>
<svg style="left:1090.2px;top:394.5px" width="8" height="5"><path d="M0 4.5L3.5 .5L7 4.5z" fill="#000"/></svg>
<div class="x rs" style="left:1086.8px;top:403.4px;width:13.8px;height:223.4px"></div>
<div class="x" style="left:127.2px;top:315.5px;width:837px;height:19px;background:#f7f7f7"></div>
<svg style="left:137.5px;top:317.8px" width="13" height="12.2"><use href="#gl"/></svg>
<i class="t" style="letter-spacing:-0.057px;left:499.5px;top:321.3px;font-size:8.8px">* ExampleLib drc layout</i>
<svg style="left:941.3px;top:319.2px" width="12" height="11.4" viewBox="0 0 12 11.4"><rect x=".3" y=".3" width="11.4" height="10.8" rx="2" fill="#e8704c" stroke="#c8502c" stroke-width=".6"/><path d="M3.4 3l5.2 5.2M8.6 3L3.4 8.2" stroke="#fff" stroke-width="1.7"/></svg>
<div class="x" style="left:1px;top:809px;width:1102px;height:3px;background:#f0f0f0"></div>
<svg style="left:5.5px;top:815.3px" width="7" height="21" viewBox="0 0 7 21"><path d="M.5 .5l5.6 5.6M6.1 .5L.5 6.1" stroke="#000" stroke-width="1.2"/><path d="M2.4 12h3.8v3.4H2.4zM.6 14h3.8v4H.6z" fill="#f0f0f0" stroke="#000" stroke-width=".9"/></svg>
<i class="t" style="letter-spacing:-0.135px;left:5px;top:949px;font-size:8.8px;transform:rotate(-90deg);transform-origin:0 0">Message Window</i>
<div class="x sk" style="left:17.6px;top:813px;width:1085px;height:117.6px"></div>
<i class="t m" style="letter-spacing:-0.001px;left:22.10px;top:815.05px;font-size:9.4px;color:#000;white-space:pre;-webkit-text-stroke:.22px #fff">3.X. Checking Poly0...</i>
<i class="t m" style="letter-spacing:-0.001px;left:22.10px;top:823.99px;font-size:9.4px;color:#000;white-space:pre;-webkit-text-stroke:.22px #fff">4.X. Checking Poly1...</i>
<i class="t m" style="letter-spacing:-0.001px;left:22.10px;top:832.93px;font-size:9.4px;color:#000;white-space:pre;-webkit-text-stroke:.22px #fff">5.X. Checking N-plus...</i>
<i class="t m" style="letter-spacing:-0.001px;left:22.10px;top:841.87px;font-size:9.4px;color:#000;white-space:pre;-webkit-text-stroke:.22px #fff">6.X. Checking contact...</i>
<i class="t m" style="letter-spacing:-0.001px;left:22.10px;top:850.81px;font-size:9.4px;color:#000;white-space:pre;-webkit-text-stroke:.22px #fff">7.X. Checking Metal1...</i>
<i class="t m" style="letter-spacing:-0.001px;left:22.10px;top:859.75px;font-size:9.4px;color:#000;white-space:pre;-webkit-text-stroke:.22px #fff">8.X. Checking Via...</i>
<i class="t m" style="letter-spacing:-0.001px;left:22.10px;top:868.69px;font-size:9.4px;color:#000;white-space:pre;-webkit-text-stroke:.22px #fff">9.X. Checking Metal2...</i>
<i class="t m" style="letter-spacing:-0.001px;left:22.10px;top:877.63px;font-size:9.4px;color:#000;white-space:pre;-webkit-text-stroke:.22px #fff">10.X. Checking Pad...</i>
<i class="t m" style="letter-spacing:-0.001px;left:22.10px;top:886.57px;font-size:9.4px;color:#000;white-space:pre;-webkit-text-stroke:.22px #fff">** Total error count =  293</i>
<i class="t m" style="letter-spacing:-0.001px;left:22.10px;top:895.51px;font-size:9.4px;color:#000;white-space:pre;-webkit-text-stroke:.22px #fff">ui().winRedraw()</i>
<i class="t m" style="letter-spacing:-0.001px;left:22.10px;top:904.45px;font-size:9.4px;color:#222;white-space:pre;-webkit-text-stroke:.22px #fff">&gt;&gt;&gt; &gt;&gt;&gt; </i>
<i class="t m" style="letter-spacing:-0.001px;left:67.22px;top:904.45px;font-size:9.4px;color:#1010e0;white-space:pre;-webkit-text-stroke:.22px #fff"># INFO: DRC run completed.</i>
<i class="t m" style="letter-spacing:-0.001px;left:22.10px;top:913.39px;font-size:9.4px;color:#1010e0;white-space:pre;-webkit-text-stroke:.22px #fff">&gt;&gt;&gt; </i>
<i class="t m" style="letter-spacing:-0.001px;left:44.66px;top:913.39px;font-size:9.4px;color:#000;white-space:pre;-webkit-text-stroke:.22px #fff">ui().zoomIn(-2463, -13264, 103491, -74589)</i>
<i class="t m" style="letter-spacing:-0.001px;left:22.10px;top:922.33px;font-size:9.4px;color:#222;white-space:pre;-webkit-text-stroke:.22px #fff">&gt;&gt;&gt;</i>
<i class="t m" style="letter-spacing:-0.290px;left:22.1px;top:806.11px;font-size:9.4px;clip-path:inset(7.3px 0 0 0)">2.X. Checking GASAD...</i>
<div class="x sk" style="left:17.6px;top:934.2px;width:1085px;height:14.8px"></div>
<svg style="left:0;top:0" width="540" height="320"><defs>
<linearGradient id="gB" x1="0" y1="0" x2="0" y2="1"><stop offset="0" stop-color="#a8b8f4"/><stop offset=".42" stop-color="#4a68e4"/><stop offset=".5" stop-color="#1c3cd8"/><stop offset="1" stop-color="#2040d0"/></linearGradient>
<linearGradient id="gS" x1="0" y1="0" x2="1" y2="0"><stop offset="0" stop-color="#9a9a9a"/><stop offset=".35" stop-color="#f4f4f4"/><stop offset=".7" stop-color="#c4c4c4"/><stop offset="1" stop-color="#888"/></linearGradient>
<linearGradient id="gW" x1="0" y1="0" x2="0" y2="1"><stop offset="0" stop-color="#fff"/><stop offset=".8" stop-color="#e4e4e4"/><stop offset="1" stop-color="#909090"/></linearGradient>
<linearGradient id="gY" x1="0" y1="0" x2="0" y2="1"><stop offset="0" stop-color="#ffc800"/><stop offset="1" stop-color="#e08800"/></linearGradient>
<radialGradient id="gG"><stop offset="0" stop-color="#b0f0b0"/><stop offset=".6" stop-color="#10b010"/><stop offset="1" stop-color="#0a9a0a"/></radialGradient>
<radialGradient id="gL"><stop offset="0" stop-color="#e8f8ff"/><stop offset="1" stop-color="#9cd4f0"/></radialGradient>
<g id="cyl"><path d="M0 2.6v13.6c0 1.6 4 2.8 9 2.8s9-1.2 9-2.8V2.6z" fill="url(#gS)"/><ellipse cx="9" cy="2.6" rx="9" ry="2.6" fill="#e0e0e0" stroke="#a0a0a0" stroke-width=".5"/><path d="M0 7.3c0 1.6 4 2.8 9 2.8s9-1.2 9-2.8M0 11.8c0 1.6 4 2.8 9 2.8s9-1.2 9-2.8" fill="none" stroke="#8a8a8a" stroke-width=".7"/></g>
<g id="fold"><path d="M1 2.5h6l1.5 2H17v10H1z" fill="#f4b030"/><path d="M.2 15.5L3 6.5h15.8L16.5 15.5z" fill="#ffd848" stroke="#f0a020" stroke-width=".6"/></g>
<g id="flop"><path d="M.5 1.5a1 1 0 0 1 1-1H17l2.5 2.5V18.5a1 1 0 0 1-1 1H1.5a1 1 0 0 1-1-1z" fill="#7880e0" stroke="#5860c0" stroke-width=".7"/><rect x="4.5" y="1" width="10.5" height="6" fill="#c0c8f8"/><rect x="10.5" y="1.8" width="2.2" height="4.2" fill="#4850b0"/><path d="M2 2v16M18 4v14" stroke="#a8b0f0" stroke-width="1"/></g>
<g id="doc"><path d="M.4 .4h11l4.6 4.6v14.2H.4z" fill="#f0f0f4" stroke="#b4b4b8" stroke-width=".7"/><path d="M11.4 .4v4.6h4.6" fill="#fff" stroke="#b4b4b8" stroke-width=".6"/></g>
<g id="bb"><rect x=".4" y=".4" width="16.4" height="16.6" rx="2" fill="url(#gB)" stroke="#2030a8" stroke-width=".8"/></g>
<g id="gb"><rect x=".5" y=".3" width="15.6" height="15.2" rx="1.8" fill="url(#gW)" stroke="#c4c4c4" stroke-width=".6"/><path d="M1 16.2h14.6" stroke="#808080" stroke-width="1.1"/></g>
<g id="grip"><path d="M.5 0v20.5" stroke="#fff" stroke-width="1"/><path d="M1.5 0v20.5" stroke="#a0a0a0" stroke-width="1"/><path d="M2.6 0v20.5" stroke="#fff" stroke-width="1"/><path d="M3.5 0v20.5" stroke="#a0a0a0" stroke-width="1"/><path d="M0 20.5h4" stroke="#a0a0a0" stroke-width=".8"/></g>
<g id="vs"><path d="M0 0v20.5" stroke="#a0a0a0" stroke-width="1"/><path d="M1 0v20.5" stroke="#fff" stroke-width="1"/></g>
</defs>
<use href="#grip" x="4.8" y="263.3"/>
<use href="#cyl" x="13.8" y="264.2"/>
<g transform="translate(38.7 265.2)"><g transform="translate(8.5 .3) scale(.62 .6)"><use href="#cyl"/></g><g transform="translate(0 1.2) scale(1 .98)"><use href="#fold"/></g></g>
<g transform="translate(63.0 263.9)"><use href="#flop"/><g transform="translate(4.2 8) scale(.64 .58)"><use href="#cyl"/></g></g>
<use href="#vs" x="88.0" y="263.3"/>
<g transform="translate(95.0 264.2)"><use href="#doc"/><use href="#gl" x="1.6" y="5" width="12.5" height="11.5"/></g>
<g transform="translate(119.1 265.6)"><g transform="translate(0 1)"><use href="#fold"/></g><use href="#gl" x="5.8" y="0" width="11.6" height="10.5"/></g>
<g transform="translate(143.4 263.9)"><use href="#flop"/><rect x="4" y="8.5" width="12" height="10.6" fill="#f4f4f4"/><use href="#gl" x="4.4" y="8.7" width="11.2" height="10.3"/></g>
<use href="#vs" x="168.4" y="263.3"/>
<g transform="translate(173.2 264.2)"><rect x="4.5" y="0" width="11" height="4" fill="#f8d860" stroke="#e0b830" stroke-width=".5"/><rect x=".4" y="3.6" width="19" height="10.6" rx="2.5" fill="#d8dce8" stroke="#8890a8" stroke-width=".7"/><rect x="3.4" y="5" width="13" height="4.6" rx="1" fill="#303030"/><rect x="4.5" y="12.6" width="11" height="6.6" fill="#f8d860" stroke="#e0b830" stroke-width=".5"/><path d="M6 15h8M6 17h8" stroke="#e8c040" stroke-width=".7"/></g>
<g transform="translate(200.2 264.2)"><use href="#doc"/><path d="M1.8 5.8h9M1.8 8h8M1.8 10.2h7M1.8 12.4h3M1.8 14.6h10" stroke="#7880d8" stroke-width="1.3"/><path d="M13.6 7v5" stroke="#333" stroke-width="1"/><circle cx="13.6" cy="11.8" r="1.2" fill="#222"/></g>
<use href="#vs" x="222.2" y="260.5"/>
<use href="#grip" x="226.0" y="263.3"/>
<g transform="translate(236.2 265.2)"><use href="#bb"/><path d="M4 9.6l5.4-5v2.6c3.4 0 5.2 2 5.2 5.4-1.2-2-2.6-2.6-5.2-2.6v2.8z" fill="#fff" transform="translate(0 .6) rotate(-18 9 9)"/></g>
<g transform="translate(261.3 265.2)"><use href="#bb"/><path d="M4 9.6l5.4-5v2.6c3.4 0 5.2 2 5.2 5.4-1.2-2-2.6-2.6-5.2-2.6v2.8z" fill="#fff" transform="translate(17.2 .6) scale(-1 1) rotate(-18 9 9)"/></g>
<use href="#vs" x="285.2" y="263.3"/>
<g transform="translate(292.5 266.4)"><path d="M2.4 0L7.2 4.6L12 0l2.3 2.3L9.6 7.2l4.7 4.8L12 14.4L7.2 9.7L2.4 14.4L0 12l4.8-4.8L0 2.3z" fill="#d84a3c"/><path d="M2.4 0L7.2 4.6L12 0l2.3 2.3L11 5.8H3.4L0 2.3z" fill="#e87850" opacity=".7"/></g>
<g transform="translate(316.4 265.2)"><g fill="#3c64f0"><path d="M8.5 0l2.6 3.4H9.4v3.2H7.6V3.4H5.9zM8.5 17.2l2.6-3.4H9.4v-3.2H7.6v3.2H5.9zM0 8.6l3.4-2.6v1.7h3.2v1.8H3.4v1.7zM17 8.6l-3.4-2.6v1.7h-3.2v1.8h3.2v1.7z"/></g><path d="M8.5 6.8v3.6M6.7 8.6h3.6" stroke="#c0c8e8" stroke-width=".8" stroke-dasharray="1 1"/></g>
<g transform="translate(341.5 265.4)"><use href="#gb"/><rect x="2.6" y="2.4" width="4.6" height="8" fill="#12b012" stroke="#0a8a0a" stroke-width=".5"/><rect x="9.6" y="7" width="4.6" height="8" fill="#12b012" stroke="#0a8a0a" stroke-width=".5"/><rect x="4" y="4" width="1.6" height="4.6" fill="#90e890"/><rect x="11" y="8.8" width="1.6" height="4.6" fill="#90e890"/></g>
<g transform="translate(366.5 265.4)"><use href="#gb"/><rect x="8" y="4.4" width="5" height="7.8" fill="#fff" stroke="#e8e090" stroke-width=".6"/><rect x="3.6" y="4.2" width="4.8" height="8.2" fill="#12b012" stroke="#0a8a0a" stroke-width=".5"/><rect x="5" y="6" width="1.6" height="4.6" fill="#90e890"/><path d="M9 8.2h3.4" stroke="#222" stroke-width=".8"/></g>
<g transform="translate(391.8 265.4)"><use href="#gb"/><rect x="8.4" y="8.8" width="4.6" height="3.4" fill="#fff" stroke="#e8e090" stroke-width=".6"/><rect x="3.6" y="4.2" width="4.8" height="8.2" fill="#12b012" stroke="#0a8a0a" stroke-width=".5"/><rect x="5" y="6" width="1.6" height="4.6" fill="#90e890"/></g>
<g transform="translate(416.9 265.4)"><use href="#gb"/><rect x="2.6" y="2.8" width="11.6" height="10.4" fill="url(#gG)"/><rect x="8.6" y="2.8" width="5.6" height="5" fill="#f8f8d8" stroke="#d8d060" stroke-width=".5"/><path d="M9.6 3.6l3.6 3.4M13.2 3.6L9.6 7" stroke="#444" stroke-width=".8"/></g>
<g transform="translate(441.9 265.4)"><use href="#gb"/><rect x="2.6" y="2.8" width="11.6" height="10.4" fill="url(#gG)"/><path d="M8 5v3.4h3.4" stroke="#e8ffe8" stroke-width="1.3" fill="none"/></g>
<g transform="translate(467.0 265.4)"><use href="#gb"/><path d="M.6 2.6h15.4" stroke="#402050" stroke-width=".9"/><rect x="2.4" y="3.6" width="5" height="8.8" fill="#12b012" stroke="#0a8a0a" stroke-width=".5"/><rect x="10.4" y="6.4" width="4.2" height="6" fill="#12b012" stroke="#0a8a0a" stroke-width=".5"/><rect x="4" y="5.4" width="1.6" height="5" fill="#a8f0a8"/><rect x="11.8" y="7.8" width="1.4" height="3" fill="#a8f0a8"/><path d="M12.4 2.8v3.4" stroke="#666" stroke-width=".6"/></g>
<g transform="translate(491.1 269.6)"><rect width="18.6" height="8.3" rx=".8" fill="url(#gY)"/><path d="M2.4 5v2.4M4.8 6v1.4M7.2 5v2.4M9.6 6v1.4M12 5v2.4M14.4 6v1.4M16.6 5v2.4" stroke="#b87000" stroke-width=".6"/></g>
<g transform="translate(516.2 269.6)"><rect width="14" height="8.3" rx=".8" fill="url(#gY)"/><path d="M2.4 5v2.4M4.8 6v1.4" stroke="#b87000" stroke-width=".6"/><circle cx="9.1" cy="4.2" r="4.3" fill="#f0a020" fill-opacity=".5" stroke="#f01818" stroke-width="1.5"/><path d="M6.1 1.2l6 6" stroke="#f01818" stroke-width="1.5"/></g>
<use href="#grip" x="4.8" y="290.8"/>
<g transform="translate(13.4 292.8)"><path d="M2 0L15.6 8.2H2z" fill="#800080"/><path d="M2 16.7L15.6 8.5H2z" fill="#30003c"/><path d="M0 8.4h19" stroke="#8080c0" stroke-width="1.3"/></g>
<g transform="translate(39.6 291.4)"><path d="M8.3 1.8V17.4H0z" fill="#800080"/><path d="M8.5 1.8V17.4H16.7z" fill="#30003c"/><path d="M8.4 0v19" stroke="#8080c0" stroke-width="1.3"/></g>
<g transform="translate(63.5 292.0)"><path d="M5.4 6.4V16.6H0z" fill="#30003c"/><path d="M8 11.6L18.6 16.6H8z" fill="#800080"/><path d="M6.8 .6v17.2" stroke="#483090" stroke-width="1"/><path d="M9 4.6l3.6-3.6v2.2c3 0 5 1.4 5.4 4.4-1.4-1.6-3-2-5.4-2v2.4z" fill="#3c64f0"/></g>
<use href="#vs" x="87.0" y="288.0"/>
<use href="#grip" x="91.0" y="290.8"/>
</svg>
<i class="t" style="letter-spacing:0.079px;left:97.1px;top:297.7px;font-size:8.8px">Start</i>
<i class="t" style="letter-spacing:-0.334px;left:146.8px;top:297.7px;font-size:8.8px">Stop</i>
<div class="x sk" style="left:117.2px;top:293.3px;width:27.8px;height:14.5px"></div>
<i class="t" style="left:120.2px;top:297.4px;font-size:8.8px">0</i>
<div class="x rs" style="left:132.4px;top:294.8px;width:11.6px;height:6px"></div>
<div class="x rs" style="left:132.4px;top:300.8px;width:11.6px;height:6px"></div>
<svg style="left:136.2px;top:296.6px" width="5" height="9"><path d="M0 2.2L2.2 0L4.4 2.2zM.8 6.8L2.2 8.2L3.6 6.8z" fill="#000"/></svg>
<div class="x sk" style="left:164.9px;top:293.3px;width:27.8px;height:14.5px"></div>
<i class="t" style="left:167.9px;top:297.4px;font-size:8.8px">99</i>
<div class="x rs" style="left:180.1px;top:294.8px;width:11.6px;height:6px"></div>
<div class="x rs" style="left:180.1px;top:300.8px;width:11.6px;height:6px"></div>
<svg style="left:183.9px;top:296.6px" width="5" height="9"><path d="M0 2.2L2.2 0L4.4 2.2zM.8 6.8L2.2 8.2L3.6 6.8z" fill="#000"/></svg>
<svg style="left:0;top:0" width="540" height="320">
<use href="#vs" x="198.0" y="288.0"/>
<use href="#grip" x="201.6" y="290.8"/>
<g transform="translate(212.0 292.4)"><use href="#bb"/><path d="M4.4 8a4.4 4.4 0 0 1 7.6-2.4M12.8 9.6a4.4 4.4 0 0 1-7.6 2.4" stroke="#fff" stroke-width="1.9" fill="none"/><path d="M13.4 3.4v3.8H9.6zM3.8 14.2v-3.8h3.8z" fill="#fff"/></g>
<use href="#vs" x="236.2" y="290.8"/>
<g transform="translate(241.9 292.6)"><use href="#bb"/><path d="M13.4 8.8H4.6M8.6 4.6L4.2 8.8l4.4 4.2" stroke="#fff" stroke-width="2.1" fill="none" stroke-linecap="round" stroke-linejoin="round"/></g>
<g transform="translate(267.0 292.6)"><use href="#bb"/><path d="M3.8 8.8h8.8M8.6 4.6l4.4 4.2-4.4 4.2" stroke="#fff" stroke-width="2.1" fill="none" stroke-linecap="round" stroke-linejoin="round"/></g>
<g transform="translate(292.0 292.6)"><use href="#bb"/><path d="M8.6 13.6V4.8M4.4 8.8l4.2-4.4 4.2 4.4" stroke="#fff" stroke-width="2.1" fill="none" stroke-linecap="round" stroke-linejoin="round"/></g>
<g transform="translate(317.2 292.6)"><use href="#bb"/><path d="M8.6 4V12.8M4.4 8.8l4.2 4.4 4.2-4.4" stroke="#fff" stroke-width="2.1" fill="none" stroke-linecap="round" stroke-linejoin="round"/></g>
<use href="#vs" x="341.2" y="290.8"/>
<g transform="translate(346.0 291.4)"><path d="M11.6 12.4l5.6 5.4" stroke="#f0a818" stroke-width="3.4" stroke-linecap="round"/><path d="M12.8 14.6l3.6 3.4" stroke="#ffd040" stroke-width="1.2"/><circle cx="7.3" cy="7.6" r="6.4" fill="url(#gL)" stroke="#a8a8a8" stroke-width="1.7"/><circle cx="7.3" cy="7.6" r="7.2" fill="none" stroke="#d0d0d0" stroke-width=".6"/><path d="M3.4 7.6h7.8" stroke="#fff" stroke-width="2.2"/><path d="M7.3 3.7v7.8" stroke="#fff" stroke-width="2.2"/></g>
<g transform="translate(371.2 291.4)"><path d="M11.6 12.4l5.6 5.4" stroke="#f0a818" stroke-width="3.4" stroke-linecap="round"/><path d="M12.8 14.6l3.6 3.4" stroke="#ffd040" stroke-width="1.2"/><circle cx="7.3" cy="7.6" r="6.4" fill="url(#gL)" stroke="#a8a8a8" stroke-width="1.7"/><circle cx="7.3" cy="7.6" r="7.2" fill="none" stroke="#d0d0d0" stroke-width=".6"/><path d="M3.4 7.6h7.8" stroke="#fff" stroke-width="2.2"/></g>
<g transform="translate(396.1 292.6)"><rect x=".4" y=".4" width="18.2" height="16.4" rx="1" fill="#fafafa" stroke="#c8c8c8" stroke-width=".7"/><rect x=".4" y=".2" width="18.2" height="2" rx=".8" fill="#7098e8"/><g fill="#222"><path d="M1.6 3.6h3l-3 3zM17.4 3.6h-3l3 3zM1.6 15.8h3l-3-3zM17.4 15.8h-3l3-3z"/></g><path d="M2.4 4.4l2.2 2.2M16.6 4.4l-2.2 2.2M2.4 15l2.2-2.2M16.6 15l-2.2-2.2" stroke="#222" stroke-width=".8"/></g>
<use href="#vs" x="419.2" y="288.0"/>
<use href="#grip" x="424.2" y="290.8"/>
<g transform="translate(437.1 293.8)"><path d="M.5 .5h10.4v14.5H.5z" fill="#d4dcfc" stroke="#58b058" stroke-width=".9"/><path d="M8.8 .5l2.1 2.1V.5z" fill="#fff" stroke="#58b058" stroke-width=".5"/><path d="M5.6 4.4v6.6M3.2 8.6l2.4 2.6l2.4-2.6" stroke="#7078f0" stroke-width="1.2" fill="none"/></g>
<g transform="translate(462.2 293.8)"><path d="M.5 .5h10.4v14.5H.5z" fill="#d4dcfc" stroke="#58b058" stroke-width=".9"/><path d="M8.8 .5l2.1 2.1V.5z" fill="#fff" stroke="#58b058" stroke-width=".5"/><path d="M5.6 11.2V4.6M3.2 7l2.4-2.6L8 7" stroke="#7078f0" stroke-width="1.2" fill="none"/></g>
<g transform="translate(483.0 294.8)"><use href="#gl" x="2.6" y="0" width="13.6" height="13"/><path d="M1 14.6L9 6.8" stroke="#e8e8e8" stroke-width="2" stroke-linecap="round"/><path d="M1 14.6L9 6.8" stroke="#888" stroke-width=".5"/><path d="M1.4 6.6l7.6.4" stroke="#f0a020" stroke-width="1.8"/></g>
<g transform="translate(509.7 293.5)"><g transform="translate(0 9.4) rotate(-18) skewX(40) scale(.8 .62)"><use href="#gl" width="14" height="13"/></g><path d="M3.6 1c3.4-.6 5.6.4 6 3.4l1.6-.4-2.4 3-3-2.2 1.8-.2c-.6-1.8-1.8-2.6-4-2.6z" fill="#6890e8"/></g>
</svg>
<i class="t" style="letter-spacing:0.226px;-webkit-text-stroke:.15px #e0e0e0;word-spacing:2.6px;left:133.0px;top:44.37px;font-size:18.7px">Verify</i>
<svg style="left:182.0px;top:50.2px" width="18.4" height="10" viewBox="0 0 18.4 10"><path d="M0 5H17.8" stroke="#111" stroke-width=".9" fill="none"/><path d="M14.4 1.6C15.0 3.4 16.6 4.6 18.2 5C16.6 5.4 15.0 6.6 14.4 8.4" stroke="#111" stroke-width=".9" fill="none"/></svg>
<i class="t" style="letter-spacing:-0.907px;-webkit-text-stroke:.15px #e0e0e0;word-spacing:2.6px;left:202.3px;top:44.37px;font-size:18.7px">DRC</i>
<svg style="left:242.6px;top:50.2px" width="18.4" height="10" viewBox="0 0 18.4 10"><path d="M0 5H17.8" stroke="#111" stroke-width=".9" fill="none"/><path d="M14.4 1.6C15.0 3.4 16.6 4.6 18.2 5C16.6 5.4 15.0 6.6 14.4 8.4" stroke="#111" stroke-width=".9" fill="none"/></svg>
<i class="t" style="letter-spacing:0.473px;-webkit-text-stroke:.15px #e0e0e0;word-spacing:2.6px;left:262.7px;top:44.37px;font-size:18.7px">Run (shift+l)</i>
<i class="t" style="letter-spacing:0.154px;-webkit-text-stroke:.15px #e0e0e0;word-spacing:2.6px;left:535.5px;top:-0.23px;font-size:18.7px">querying error marker properties (q)</i>
<i class="t" style="letter-spacing:-0.138px;-webkit-text-stroke:.15px #e0e0e0;word-spacing:2.6px;left:148.9px;top:1035.77px;font-size:18.7px">Report on total DRC</i>
<i class="t" style="letter-spacing:-0.143px;-webkit-text-stroke:.15px #e0e0e0;word-spacing:2.6px;left:189.8px;top:1055.97px;font-size:18.7px">error count</i>
<i class="t" style="letter-spacing:0.026px;-webkit-text-stroke:.15px #e0e0e0;word-spacing:2.6px;left:487.3px;top:1254.57px;font-size:18.7px">Verify</i>
<svg style="left:535.0px;top:1260.4px" width="18.8" height="10" viewBox="0 0 18.8 10"><path d="M0 5H18.2" stroke="#111" stroke-width=".9" fill="none"/><path d="M14.8 1.6C15.4 3.4 17.0 4.6 18.6 5C17.0 5.4 15.4 6.6 14.8 8.4" stroke="#111" stroke-width=".9" fill="none"/></svg>
<i class="t" style="letter-spacing:-0.257px;-webkit-text-stroke:.15px #e0e0e0;word-spacing:2.6px;left:555.1px;top:1254.57px;font-size:18.7px">DRC</i>
<svg style="left:595.9px;top:1260.4px" width="18.8" height="10" viewBox="0 0 18.8 10"><path d="M0 5H18.2" stroke="#111" stroke-width=".9" fill="none"/><path d="M14.8 1.6C15.4 3.4 17.0 4.6 18.6 5C17.0 5.4 15.4 6.6 14.8 8.4" stroke="#111" stroke-width=".9" fill="none"/></svg>
<i class="t" style="letter-spacing:-0.363px;-webkit-text-stroke:.15px #e0e0e0;word-spacing:2.6px;left:616.0px;top:1254.57px;font-size:18.7px">View errors</i>
<div class="x" style="left:133px;top:69px;width:272px;height:113px;background:#f0f0f0;border:1px solid #3a3a3a">
<div class="x" style="left:0;top:0;width:270px;height:33.5px;background:#fff"></div>
<svg style="left:11px;top:8px" width="17" height="17"><use href="#gl"/></svg>
<i class="t" style="letter-spacing:-0.816px;left:31.3px;top:10.6px;font-size:13.6px">Run DRC</i>
<i class="t" style="left:187px;top:9.5px;font-size:14px">?</i>
<svg style="left:237.8px;top:10.6px" width="12" height="12"><path d="M0 0L12 11.5M12 0L0 11.5" stroke="#000" stroke-width="1" fill="none"/></svg>
<i class="t" style="letter-spacing:-0.094px;left:3.4px;top:41.1px;font-size:12px">DRC rules file</i>
<div class="x" style="left:80.3px;top:36.3px;width:153.2px;height:19px;background:#fff;border:1px solid #0078d7"></div>
<i class="t" style="letter-spacing:0.157px;left:82.7px;top:41.1px;font-size:12px">verification/cnm25drc.py</i>
<div class="x w10" style="left:238.3px;top:37.3px;width:27.4px;height:17.4px"></div>
<svg style="left:243px;top:39px" width="18" height="14" viewBox="0 0 18 14"><path d="M7 1h7l2 2v9H7z" fill="#f4f4f4" stroke="#c8c8c8" stroke-width=".6"/><path d="M1 3.5h5l1.2 1.5H14v8H1z" fill="#f2b933"/><path d="M1 13l2.2-6.5H16.5L14 13z" fill="#ffd95a"/></svg>
<i class="t" style="letter-spacing:-0.114px;left:3.4px;top:63.8px;font-size:12px">DRC file variables</i>
<div class="x" style="left:101.8px;top:59.5px;width:164.9px;height:18.4px;background:#fff;border:1px solid #7a7a7a"></div>
<div class="x w10" style="left:4.4px;top:83.4px;width:83.5px;height:23.4px"></div>
<i class="t" style="letter-spacing:-0.227px;left:33.7px;top:90.3px;font-size:12px">Help</i>
<div class="x" style="left:93.4px;top:83.4px;width:83.6px;height:23.4px;background:#e1e1e1;border:2px solid #0078d7"></div>
<i class="t" style="letter-spacing:-0.638px;left:126.8px;top:90.3px;font-size:12px">OK</i>
<div class="x w10" style="left:182.2px;top:83.4px;width:83.5px;height:23.4px"></div>
<i class="t" style="letter-spacing:-0.551px;left:206.8px;top:90.3px;font-size:12px">Cancel</i>
<svg style="left:259px;top:99px" width="10" height="10"><path d="M8 2h1M8 5h1M5 5h1M8 8h1M5 8h1M2 8h1" stroke="#b8b8b8" stroke-width="1.4" fill="none"/></svg>
</div>
<div class="x" style="left:529.6px;top:25.2px;width:537.4px;height:289.6px;background:#f0f0f0;border:1px solid #5a5a5a"></div>
<div class="x" style="left:530.6px;top:26.2px;width:535.4px;height:26.2px;background:#fff"></div>
<svg style="left:537.9px;top:32.3px" width="13.6" height="12.6"><use href="#gl"/></svg>
<i class="t" style="letter-spacing:-0.045px;left:556.2px;top:33.33px;font-size:10.6px;color:#989898">Properties for object POLYGON in cell drc view layout</i>
<svg style="left:950px;top:30px" width="110" height="18"><g stroke="#8a8a8a" stroke-width=".9" fill="none"><path d="M9 8.6h10.6"/><rect x="50.4" y="3.8" width="9.2" height="9.2"/><path d="M91.2 3.8l10 9.4M101.2 3.8l-10 9.4"/></g></svg>
<div class="x" style="left:603px;top:59px;width:52.6px;height:15px;background:#f0f0f0;border:1px solid;border-color:#fff #696969 transparent #fff;box-shadow:inset -1px 0 0 #a0a0a0"></div>
<div class="x" style="left:536.8px;top:73.2px;width:522.4px;height:185.4px;background:#f0f0f0;border:1px solid;border-color:#fff #696969 #696969 #fff;box-shadow:inset -1px -1px 0 #a0a0a0"></div>
<div class="x" style="left:537.6px;top:56.6px;width:64.6px;height:18px;background:#f0f0f0;border:1px solid;border-color:#fff #696969 transparent #fff;box-shadow:inset -1px 0 0 #a0a0a0"></div>
<i class="t" style="letter-spacing:-0.490px;left:547.3px;top:60.53px;font-size:10.6px;color:#000">Properties</i>
<i class="t" style="letter-spacing:-0.735px;left:612.5px;top:61.23px;font-size:10.6px;color:#000">Polygon</i>
<div class="x" style="left:544.4px;top:79.6px;width:476.6px;height:127.4px;background:#fff;border:1px solid;border-color:#696969 #e0e0e0 #e0e0e0 #696969;box-shadow:inset 1px 1px 0 #a0a0a0"></div>
<div class="x" style="left:546.4px;top:81.6px;width:57.7px;height:20px;background:#f0f0f0;border:1px solid;border-color:#fff #696969 #696969 #fff;box-shadow:inset -1px -1px 0 #a0a0a0"></div>
<div class="x" style="left:603.1px;top:102px;width:1px;height:25.4px;background:#c4c4c4"></div>
<div class="x" style="left:604.1px;top:81.6px;width:45.0px;height:20px;background:#f0f0f0;border:1px solid;border-color:#fff #696969 #696969 #fff;box-shadow:inset -1px -1px 0 #a0a0a0"></div>
<div class="x" style="left:648.1px;top:102px;width:1px;height:25.4px;background:#c4c4c4"></div>
<div class="x" style="left:649.1px;top:81.6px;width:278.3px;height:20px;background:#f0f0f0;border:1px solid;border-color:#fff #696969 #696969 #fff;box-shadow:inset -1px -1px 0 #a0a0a0"></div>
<div class="x" style="left:926.4px;top:102px;width:1px;height:25.4px;background:#c4c4c4"></div>
<div class="x" style="left:927.4px;top:81.6px;width:51.2px;height:20px;background:#f0f0f0;border:1px solid;border-color:#fff #696969 #696969 #fff;box-shadow:inset -1px -1px 0 #a0a0a0"></div>
<div class="x" style="left:977.6px;top:102px;width:1px;height:25.4px;background:#c4c4c4"></div>
<div class="x" style="left:978.6px;top:81.6px;width:41.6px;height:20px;background:#f0f0f0;border:1px solid;border-color:#fff #696969 #696969 #fff;box-shadow:inset -1px -1px 0 #a0a0a0"></div>
<div class="x" style="left:1019.2px;top:102px;width:1px;height:25.4px;background:#c4c4c4"></div>
<div class="x" style="left:546.4px;top:127px;width:473.8px;height:1px;background:#c4c4c4"></div>
<div class="x" style="left:546.4px;top:102px;width:3.6px;height:25.4px;background:#f0f0f0;border-right:1px solid #c4c4c4"></div>
<i class="t" style="letter-spacing:-1.392px;left:551.7px;top:85.73px;font-size:10.6px;color:#000">Name</i>
<i class="t" style="letter-spacing:-0.627px;left:607.9px;top:85.73px;font-size:10.6px;color:#000">Type</i>
<i class="t" style="letter-spacing:-0.731px;left:652.4px;top:85.73px;font-size:10.6px;color:#000">Value</i>
<i class="t" style="letter-spacing:-0.907px;left:931.7px;top:85.73px;font-size:10.6px;color:#000">Callback</i>
<i class="t" style="letter-spacing:-0.793px;left:982.0px;top:85.73px;font-size:10.6px;color:#000">Display</i>
<i class="t" style="letter-spacing:0.075px;left:551.7px;top:109.53px;font-size:10.6px;color:#000">drcWhy</i>
<i class="t" style="letter-spacing:0.076px;left:607.9px;top:109.53px;font-size:10.6px;color:#000">string</i>
<i class="t" style="letter-spacing:-0.108px;left:652.4px;top:109.53px;font-size:10.6px;color:#000">Error: Poly1 enclosure of Contact &lt; 1.25um (see rule 6.4)</i>
<i class="t" style="letter-spacing:0.011px;left:982.0px;top:109.53px;font-size:10.6px;color:#000">true</i>
<div class="x" style="left:546.4px;top:192.4px;width:473.8px;height:14px;background:#f6f6f6"></div>
<div class="x rs" style="left:546.4px;top:192.4px;width:13.4px;height:14px"></div>
<div class="x rs" style="left:559.8px;top:192.4px;width:356px;height:14px"></div>
<div class="x rs" style="left:1004px;top:192.4px;width:16px;height:14px"></div>
<svg style="left:550px;top:195.6px" width="470" height="8"><path d="M4 0v7L.6 3.5zM459.6 0v7L463 3.5z" fill="#000"/></svg>
<div class="x rs" style="left:1027.2px;top:80.1px;width:24.6px;height:24.4px"></div>
<svg style="left:1033px;top:85.7px" width="14" height="14" viewBox="0 0 14 14"><defs><radialGradient id="bp1" cx=".5" cy=".3" r=".7"><stop offset="0" stop-color="#8098f8"/><stop offset="1" stop-color="#1c34c8"/></radialGradient></defs><circle cx="7" cy="7" r="6.4" fill="url(#bp1)"/><path d="M3.2 7h7.6M7 3.2v7.6" stroke="#fff" stroke-width="2.2"/></svg>
<div class="x rs" style="left:1027.2px;top:111.3px;width:24.6px;height:24.4px"></div>
<svg style="left:1033px;top:116.9px" width="14" height="14" viewBox="0 0 14 14"><defs><radialGradient id="bp0" cx=".5" cy=".3" r=".7"><stop offset="0" stop-color="#8098f8"/><stop offset="1" stop-color="#1c34c8"/></radialGradient></defs><circle cx="7" cy="7" r="6.4" fill="url(#bp0)"/><path d="M3.2 7h7.6" stroke="#fff" stroke-width="2.2"/></svg>
<div class="x" style="left:543.2px;top:219px;width:509px;height:33.4px;border:1px solid #b8b8b8;box-shadow:1px 1px 0 #fff, inset 1px 1px 0 #fff"></div>
<div class="x" style="left:548.5px;top:215px;width:75px;height:10px;background:#f0f0f0"></div>
<i class="t" style="letter-spacing:-0.484px;left:550.5px;top:213.63px;font-size:10.6px;color:#000">Property Display</i>
<svg style="left:548.8px;top:233.5px" width="11" height="11" viewBox="0 0 11 11"><circle cx="5.5" cy="5.5" r="4.3" fill="#fff" stroke="#d8d8d8" stroke-width="1.1"/><path d="M2.4 8.6A4.3 4.3 0 0 1 8.6 2.4" fill="none" stroke="#707070" stroke-width="1.1"/><circle cx="5.5" cy="5.5" r="1.7" fill="#000"/></svg>
<svg style="left:799.5px;top:233.5px" width="11" height="11" viewBox="0 0 11 11"><circle cx="5.5" cy="5.5" r="4.3" fill="#fff" stroke="#d8d8d8" stroke-width="1.1"/><path d="M2.4 8.6A4.3 4.3 0 0 1 8.6 2.4" fill="none" stroke="#707070" stroke-width="1.1"/></svg>
<i class="t" style="letter-spacing:-0.521px;left:564.6px;top:234.23px;font-size:10.6px;color:#000">PCell properties</i>
<i class="t" style="letter-spacing:-0.314px;left:815.8px;top:234.23px;font-size:10.6px;color:#000">Instance properties</i>
<div class="x sk" style="left:544.4px;top:268.5px;width:10.4px;height:10.4px"></div>
<i class="t" style="letter-spacing:-0.509px;left:559.9px;top:268.93px;font-size:10.6px;color:#808080">Change all selected objects</i>
<i class="t" style="letter-spacing:-0.472px;left:940.0px;top:268.93px;font-size:10.6px;color:#000">Items selected</i>
<div class="x sk" style="left:1008.1px;top:264.3px;width:42.8px;height:20.2px"></div>
<i class="t" style="left:1012px;top:269px;font-size:10.6px">1</i>
<div class="x rs" style="left:544.4px;top:290px;width:67.1px;height:20px"></div>
<i class="t" style="letter-spacing:-0.534px;left:559.0px;top:294.83px;font-size:10.6px;color:#000">Unselect</i>
<div class="x rs" style="left:618.6px;top:290px;width:66.6px;height:20px"></div>
<i class="t" style="letter-spacing:-0.586px;left:628.9px;top:294.83px;font-size:10.6px;color:#909090">&lt; Previous</i>
<div class="x rs" style="left:691.8px;top:290px;width:66.6px;height:20px"></div>
<i class="t" style="letter-spacing:-0.086px;left:708.7px;top:294.83px;font-size:10.6px;color:#909090">Next &gt;</i>
<div class="x rs" style="left:765.0px;top:290px;width:66.7px;height:20px"></div>
<i class="t" style="letter-spacing:-0.668px;left:783.8px;top:294.83px;font-size:10.6px;color:#000">Delete</i>
<div class="x rs" style="left:838.2px;top:290px;width:66.7px;height:20px"></div>
<i class="t" style="letter-spacing:-0.779px;left:859.0px;top:294.83px;font-size:10.6px;color:#000">Apply</i>
<div class="x rs" style="left:911.5px;top:291px;width:65.1px;height:18.2px;border-color:#fff #404040 #404040 #fff;box-shadow:inset -1px -1px 0 #808080, 0 0 0 1px #606060"></div>
<i class="t" style="letter-spacing:-1.515px;left:936.8px;top:294.83px;font-size:10.6px;color:#000">OK</i>
<div class="x rs" style="left:984.7px;top:290px;width:66.2px;height:20px"></div>
<i class="t" style="letter-spacing:-0.959px;left:1002.6px;top:294.83px;font-size:10.6px;color:#000">Cancel</i>
<div class="x" style="left:466.8px;top:686px;width:790px;height:564.4px;background:#f0f0f0;border:1px solid #8a8a8a"></div>
<div class="x" style="left:467.8px;top:687px;width:788px;height:42px;background:#fff"></div>
<svg style="left:479.7px;top:695.9px" width="22" height="20.8"><use href="#gl"/></svg>
<i class="t" style="letter-spacing:-0.772px;left:509.3px;top:698.50px;font-size:17.6px;color:#000">View DRC errors</i>
<i class="t" style="left:1154.4px;top:697px;font-size:19px">?</i>
<svg style="left:1216.1px;top:698.7px" width="15" height="15"><path d="M0 0L14.7 14.7M14.7 0L0 14.7" stroke="#000" stroke-width="1.3" fill="none"/></svg>
<div class="x" style="left:476.3px;top:738.6px;width:587.4px;height:460.4px;background:#fff;border:1.5px solid;border-color:#696969 #fff #fff #696969;box-shadow:inset 1px 1px 0 #a0a0a0"></div>
<i class="t" style="letter-spacing:0.100px;left:483.0px;top:744.03px;font-size:16.5px;color:#000">Error: Contact size not equal to 2.5um x 2.5um (see rule 6.1)</i>
<div class="x" style="left:479.5px;top:761.96px;width:558.5px;height:21.66px;background:#e9e7e3"></div>
<i class="t" style="letter-spacing:0.125px;left:483.0px;top:765.69px;font-size:16.5px;color:#000">Error: Contact spacing &lt; 3um (see rule 6.2)</i>
<i class="t" style="letter-spacing:0.165px;left:483.0px;top:787.35px;font-size:16.5px;color:#000">Error: Contact spacing to Poly1 &amp; Poly0 &lt; 4um (see rule 6.10)</i>
<div class="x" style="left:479.5px;top:805.28px;width:558.5px;height:21.66px;background:#e9e7e3"></div>
<i class="t" style="letter-spacing:0.084px;left:483.0px;top:809.01px;font-size:16.5px;color:#000">Error: Contact spacing to Poly1 inside GASAD &lt; 2um (see rule 6.6)</i>
<i class="t" style="letter-spacing:0.319px;left:483.0px;top:830.67px;font-size:16.5px;color:#000">Error: Contact without Metal1</i>
<div class="x" style="left:479.5px;top:848.60px;width:558.5px;height:21.66px;background:#e9e7e3"></div>
<i class="t" style="letter-spacing:0.058px;left:483.0px;top:852.33px;font-size:16.5px;color:#000">Error: GASAD enclosure of Contact &lt; 1um (see rule 6.3)</i>
<i class="t" style="letter-spacing:0.023px;left:483.0px;top:873.99px;font-size:16.5px;color:#000">Error: GASAD extension of Poly1 &lt; 3um (see rule 4.3)</i>
<div class="x" style="left:479.5px;top:891.92px;width:558.5px;height:21.66px;background:#e9e7e3"></div>
<i class="t" style="letter-spacing:-0.049px;left:483.0px;top:895.65px;font-size:16.5px;color:#000">Error: GASAD spacing &lt; 4um (see rule 2.2)</i>
<i class="t" style="letter-spacing:0.013px;left:483.0px;top:917.31px;font-size:16.5px;color:#000">Error: GASAD width &lt; 2um (see rule 2.1)</i>
<div class="x" style="left:479.5px;top:935.24px;width:558.5px;height:21.66px;background:#e9e7e3"></div>
<i class="t" style="letter-spacing:0.129px;left:483.0px;top:938.97px;font-size:16.5px;color:#000">Error: Metal1 enclosure of Contact &lt; 1.25um (see rule 7.3)</i>
<i class="t" style="letter-spacing:0.075px;left:483.0px;top:960.63px;font-size:16.5px;color:#000">Error: Metal1 spacing &lt; 3um (see rule 7.2)</i>
<div class="x" style="left:479.5px;top:978.56px;width:558.5px;height:21.66px;background:#0078d7;border:1px dotted #d89060"></div>
<i class="t" style="letter-spacing:0.141px;left:483.0px;top:982.29px;font-size:16.5px;color:#fff">Error: Metal1 width &lt; 2.5um (see rule 7.1)</i>
<i class="t" style="letter-spacing:0.062px;left:483.0px;top:1003.95px;font-size:16.5px;color:#000">Error: Metal2 enclosure of Via &lt; 1.25um (see rule 9.3)</i>
<div class="x" style="left:479.5px;top:1021.88px;width:558.5px;height:21.66px;background:#e9e7e3"></div>
<i class="t" style="letter-spacing:0.075px;left:483.0px;top:1025.61px;font-size:16.5px;color:#000">Error: Metal2 spacing &lt; 3.5um (see rule 9.2)</i>
<i class="t" style="letter-spacing:0.141px;left:483.0px;top:1047.27px;font-size:16.5px;color:#000">Error: Metal2 width &lt; 3.5um (see rule 9.1)</i>
<div class="x" style="left:479.5px;top:1065.20px;width:558.5px;height:21.66px;background:#e9e7e3"></div>
<i class="t" style="letter-spacing:0.042px;left:483.0px;top:1068.93px;font-size:16.5px;color:#000">Error: N-plus enclosure of GASAD &lt; 2.5um (see rule 5.1)</i>
<i class="t" style="letter-spacing:0.170px;left:483.0px;top:1090.59px;font-size:16.5px;color:#000">Error: N-plus spacing to P-plus active &lt; 2.5um (see rule 5.2)</i>
<div class="x" style="left:479.5px;top:1108.52px;width:558.5px;height:21.66px;background:#e9e7e3"></div>
<i class="t" style="letter-spacing:0.185px;left:483.0px;top:1112.25px;font-size:16.5px;color:#000">Error: N-well enclosure of P-plus active &lt; 5um (see rule 2.3)</i>
<i class="t" style="letter-spacing:0.165px;left:483.0px;top:1133.91px;font-size:16.5px;color:#000">Error: N-well spacing &lt; 8um (see rule 1.2)</i>
<div class="x" style="left:479.5px;top:1151.84px;width:558.5px;height:21.66px;background:#e9e7e3"></div>
<i class="t" style="letter-spacing:0.231px;left:483.0px;top:1155.57px;font-size:16.5px;color:#000">Error: N-well spacing to N-plus active &lt; 5um (see rule 2.4)</i>
<i class="t" style="letter-spacing:0.206px;left:483.0px;top:1177.23px;font-size:16.5px;color:#000">Error: N-well width &lt; 8um (see rule 1.1)</i>
<div class="x" style="left:1038.3px;top:741.5px;width:23.2px;height:455.5px;background:#f4f4f4"></div>
<div class="x rs" style="left:1038.3px;top:741.5px;width:23.2px;height:22.4px;border-width:1.5px;box-shadow:inset -1.5px -1.5px 0 #a0a0a0"></div>
<div class="x rs" style="left:1038.3px;top:763.9px;width:23.2px;height:237.4px;border-width:1.5px;box-shadow:inset -1.5px -1.5px 0 #a0a0a0"></div>
<div class="x rs" style="left:1038.3px;top:1173.8px;width:23.2px;height:23px;border-width:1.5px;box-shadow:inset -1.5px -1.5px 0 #a0a0a0"></div>
<svg style="left:1044.3px;top:749px" width="12" height="442"><path d="M0 7L5.5 .6L11 7zM0 432.4L5.5 438.8L11 432.4z" fill="#000"/></svg>
<div class="x rs" style="left:1069.5px;top:740.1px;width:177.2px;height:32.1px;border-width:1.5px;box-shadow:inset -1.5px -1.5px 0 #a0a0a0"></div>
<i class="t" style="letter-spacing:0.124px;left:1140.2px;top:748.13px;font-size:16.5px;color:#000">Next</i>
<div class="x rs" style="left:1069.5px;top:854.7px;width:177.2px;height:32.5px;border-width:1.5px;box-shadow:inset -1.5px -1.5px 0 #a0a0a0"></div>
<i class="t" style="letter-spacing:-1.376px;left:1141.7px;top:862.63px;font-size:16.5px;color:#000">Prev</i>
<div class="x rs" style="left:1069.5px;top:970.0px;width:177.2px;height:32.4px;border-width:1.5px;box-shadow:inset -1.5px -1.5px 0 #a0a0a0"></div>
<i class="t" style="letter-spacing:-0.552px;left:1108.0px;top:978.63px;font-size:16.5px;color:#000">Delete Marker</i>
<i class="t" style="letter-spacing:-1.124px;left:1067.4px;top:1084.63px;font-size:16.5px;color:#000">Viewed</i>
<i class="t" style="letter-spacing:-1.097px;left:1067.4px;top:1145.43px;font-size:16.5px;color:#000">Remaining</i>
<div class="x sk" style="left:1068.7px;top:1105.6px;width:178px;height:34px;border-width:1.5px;box-shadow:inset 1.5px 1.5px 0 #a0a0a0"></div>
<i class="t" style="left:1074.2px;top:1115.73px;font-size:16.5px">1</i>
<div class="x sk" style="left:1068.7px;top:1165.9px;width:178px;height:34px;border-width:1.5px;box-shadow:inset 1.5px 1.5px 0 #a0a0a0"></div>
<i class="t" style="left:1074.2px;top:1175.53px;font-size:16.5px">1</i>
<div class="x rs" style="left:477.8px;top:1205.4px;width:107.2px;height:33.2px;border-width:1.5px;box-shadow:inset -1.5px -1.5px 0 #a0a0a0"></div>
<i class="t" style="letter-spacing:-0.745px;left:513.9px;top:1213.33px;font-size:16.5px;color:#000">Help</i>
<div class="x rs" style="left:1025.5px;top:1206.6px;width:104.2px;height:30.8px;border-width:1.5px;border-color:#fff #404040 #404040 #fff;box-shadow:inset -1.5px -1.5px 0 #808080,0 0 0 1.2px #555"></div>
<i class="t" style="letter-spacing:-1.240px;left:1066.0px;top:1213.33px;font-size:16.5px;color:#000">OK</i>
<div class="x rs" style="left:1139.7px;top:1205.4px;width:106.6px;height:33.2px;border-width:1.5px;box-shadow:inset -1.5px -1.5px 0 #a0a0a0"></div>
<i class="t" style="letter-spacing:-0.513px;left:1165.8px;top:1213.33px;font-size:16.5px;color:#000">Cancel</i>
<svg style="left:1240px;top:1233.6px" width="17" height="16"><path d="M14 1L1 14M15 6L6 15M15.5 10.5L10.5 15.5" stroke="#a8a8a8" stroke-width="1.2"/></svg>
<svg style="left:0;top:0" width="1257" height="1275"><g stroke="#000" stroke-width="1.6" fill="none"><path d="M243 181.8L145.4 247"/><path d="M715.6 314.9L703.1 334.4"/><path d="M166.9 896L221.5 1031.6"/></g><path d="M703.1 334.4L680 370.9" stroke="#fff" stroke-width="1.6"/></svg>
</body></html>
